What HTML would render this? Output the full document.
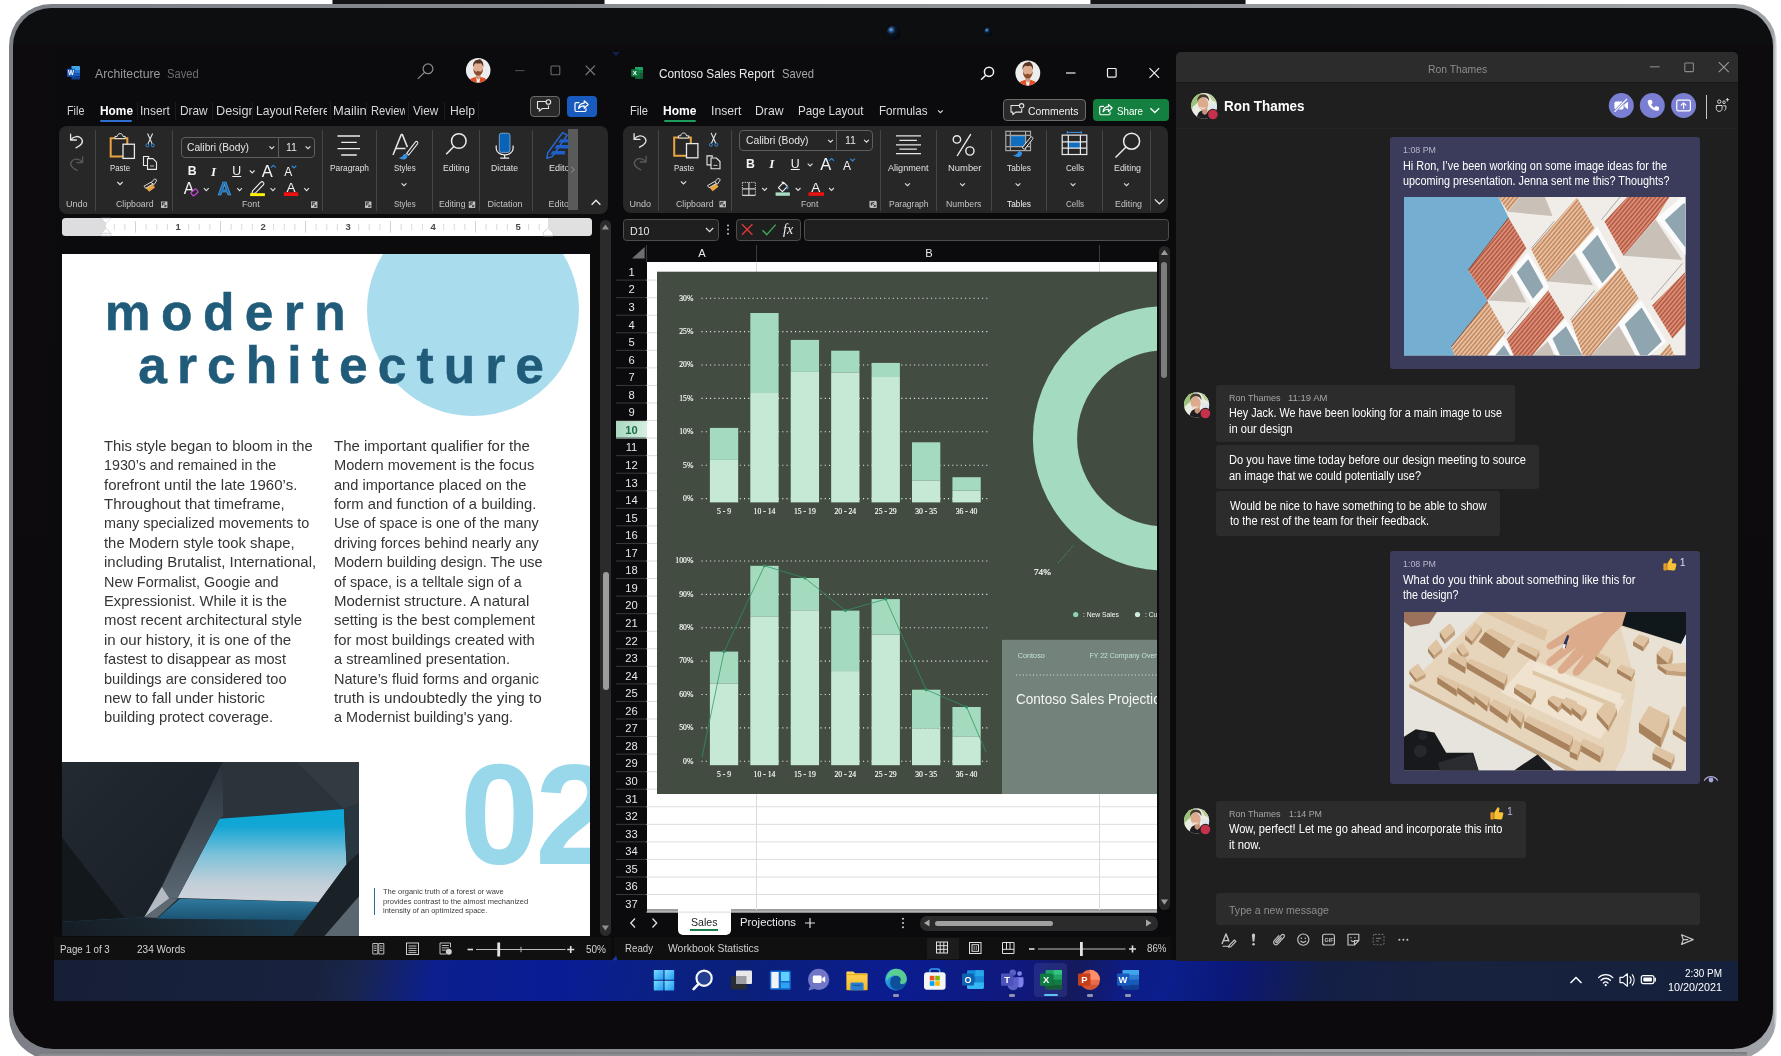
<!DOCTYPE html>
<html lang="en">
<head>
<meta charset="utf-8">
<title>Windows 11 tablet – Word, Excel and Teams</title>
<style>
*{box-sizing:border-box;margin:0;padding:0}
html,body{width:1781px;height:1056px;overflow:hidden;background:#fff}
body{position:relative;font-family:"Liberation Sans",sans-serif;color:#fff;font-size:12px}
.t{position:absolute;white-space:nowrap;line-height:1}
svg{position:absolute;overflow:visible}
#topbtn1,#topbtn2{position:absolute;top:-2px;height:6px;background:#141416;border:1.5px solid #7d8085;border-bottom:none}
#topbtn1{left:332px;width:273px}
#topbtn2{left:1090px;width:156px}
#frame{position:absolute;left:9px;top:4px;width:1768px;height:1056px;border-radius:42px 42px 44px 44px;
  background:linear-gradient(90deg,#7c8086 0,#8b8e93 40%,#9b9da1 85%,#a0a4a9 99.8%,#c6c9cd 99.9%,#ededee 100%)}
#frame:after{content:"";position:absolute;left:30px;right:30px;bottom:3px;height:5px;background:linear-gradient(180deg,#77787c,#9a9b9f)}
#bezel{position:absolute;left:13px;top:8px;width:1760px;height:1041px;border-radius:38px 38px 40px 40px;background:linear-gradient(180deg,#0d0e10 0,#0d0e10 36px,#0e0b0f 37px,#0d0a0e 100%)}
#screen{position:absolute;left:54px;top:50px;width:1684px;height:950.5px;background:#0b0a0d;overflow:hidden}
#g{position:absolute;left:-54px;top:-50px;width:1781px;height:1056px;will-change:transform}
#taskbar{position:absolute;left:54px;top:960px;width:1684px;height:41px;
 background:linear-gradient(102deg,#171f36 0,#18223e 15.5%,#19254c 18%,#0c1f8c 22.5%,#0a1c95 30%,#0b2184 36%,#0a2079 41%,#0b1c90 50%,#10197a 58%,#151a5c 60.5%,#0e1c86 63.5%,#0b1e8c 66%,#0b1876 70%,#141f48 75%,#17223f 82%,#15213b 100%)}
</style>
</head>
<body>
<div id="topbtn1"></div><div id="topbtn2"></div>
<div id="frame"></div>
<div id="bezel"></div>
<svg style="left:0;top:0" width="1781" height="56" viewBox="0 0 1781 56"><defs><radialGradient id="cam" cx=".32" cy=".28" r=".7"><stop offset="0" stop-color="#7fb6e8"/><stop offset=".18" stop-color="#2a5f9e"/><stop offset=".45" stop-color="#0b1626"/><stop offset="1" stop-color="#05070a"/></radialGradient></defs><circle cx="893.600" cy="32.800" r="7" fill="url(#cam)"/><circle cx="988.300" cy="32" r="4.400" fill="url(#cam)"/></svg>
<div id="screen"><div id="g">
<div id="taskbar"></div>
<!-- word -->
<div class="t" style="left:94.6px;top:67.64px;font-size:12px;transform:scaleX(1.0215);transform-origin:0 0;color:#9b9b9b;">Architecture</div>
<div class="t" style="left:167px;top:67.64px;font-size:12px;transform:scaleX(0.9287);transform-origin:0 0;color:#6f6f6f;">Saved</div>
<div class="t" style="left:66.6px;top:105.13px;font-size:12.6px;transform:scaleX(0.857);transform-origin:0 0;color:#d6d6d6;">File</div>
<div class="t" style="left:140.2px;top:105.13px;font-size:12.6px;transform:scaleX(0.9457);transform-origin:0 0;color:#d6d6d6;">Insert</div>
<div class="t" style="left:179.5px;top:105.13px;font-size:12.6px;transform:scaleX(0.9421);transform-origin:0 0;color:#d6d6d6;">Draw</div>
<div class="t" style="left:413px;top:105.13px;font-size:12.6px;transform:scaleX(0.9305);transform-origin:0 0;color:#d6d6d6;">View</div>
<div class="t" style="left:449.5px;top:105.13px;font-size:12.6px;transform:scaleX(0.9686);transform-origin:0 0;color:#d6d6d6;">Help</div>
<div style="position:absolute;left:0;top:0;width:251.5px;height:1056px;overflow:hidden"><div class="t" style="left:216.2px;top:105.13px;font-size:12.6px;transform:scaleX(1.0097);transform-origin:0 0;color:#d6d6d6;">Design</div></div>
<div style="position:absolute;left:0;top:0;width:290.9px;height:1056px;overflow:hidden"><div class="t" style="left:255.6px;top:105.13px;font-size:12.6px;transform:scaleX(0.9648);transform-origin:0 0;color:#d6d6d6;">Layout</div></div>
<div style="position:absolute;left:0;top:0;width:327.4px;height:1056px;overflow:hidden"><div class="t" style="left:293.6px;top:105.13px;font-size:12.6px;transform:scaleX(0.9389);transform-origin:0 0;color:#d6d6d6;">References</div></div>
<div style="position:absolute;left:0;top:0;width:365.6px;height:1056px;overflow:hidden"><div class="t" style="left:333px;top:105.13px;font-size:12.6px;transform:scaleX(1.0278);transform-origin:0 0;color:#d6d6d6;">Mailings</div></div>
<div style="position:absolute;left:0;top:0;width:405.1px;height:1056px;overflow:hidden"><div class="t" style="left:370.5px;top:105.13px;font-size:12.6px;transform:scaleX(0.8859);transform-origin:0 0;color:#d6d6d6;">Review</div></div>
<div class="t" style="left:99.6px;top:105.13px;font-size:12.6px;transform:scaleX(0.9427);transform-origin:0 0;color:#fff;font-weight:bold;">Home</div>
<div style="position:absolute;left:100px;top:120.2px;width:32.4px;height:2px;background:#2f6fd0;border-radius:1px"></div>
<div style="position:absolute;left:136.5px;top:102px;width:1px;height:18px;background:#1c1c1e;"></div>
<div style="position:absolute;left:174.5px;top:102px;width:1px;height:18px;background:#1c1c1e;"></div>
<div style="position:absolute;left:212px;top:102px;width:1px;height:18px;background:#1c1c1e;"></div>
<div style="position:absolute;left:251.5px;top:102px;width:1px;height:18px;background:#1c1c1e;"></div>
<div style="position:absolute;left:291px;top:102px;width:1px;height:18px;background:#1c1c1e;"></div>
<div style="position:absolute;left:329.5px;top:102px;width:1px;height:18px;background:#1c1c1e;"></div>
<div style="position:absolute;left:365.5px;top:102px;width:1px;height:18px;background:#1c1c1e;"></div>
<div style="position:absolute;left:408px;top:102px;width:1px;height:18px;background:#1c1c1e;"></div>
<div style="position:absolute;left:443.5px;top:102px;width:1px;height:18px;background:#1c1c1e;"></div>
<div style="position:absolute;left:478px;top:102px;width:1px;height:18px;background:#1c1c1e;"></div>
<div style="position:absolute;left:530px;top:96.2px;width:29.5px;height:21px;border:1px solid #6a6a6a;border-radius:4px;background:#292929"></div>
<div style="position:absolute;left:567px;top:96.2px;width:30px;height:21px;border-radius:4px;background:#185abd"></div>
<div style="position:absolute;left:59px;top:126px;width:549.3px;height:87.5px;background:#272727;border-radius:8px"></div>
<div class="t" style="left:66px;top:200.48px;font-size:9px;color:#c4c4c4;">Undo</div>
<div style="position:absolute;left:95px;top:130px;width:1px;height:81px;background:#454545;"></div>
<div style="position:absolute;left:172px;top:130px;width:1px;height:81px;background:#454545;"></div>
<div class="t" style="left:110px;top:163.78px;font-size:9px;transform:scaleX(0.869);transform-origin:0 0;color:#e0e0e0;">Paste</div>
<div class="t" style="left:115.5px;top:200.48px;font-size:9px;transform:scaleX(0.9734);transform-origin:0 0;color:#c4c4c4;">Clipboard</div>
<div style="position:absolute;left:180.5px;top:136.5px;width:134px;height:21px;border:1px solid #5e5e5e;border-radius:4px;background:#262626"></div>
<div style="position:absolute;left:278px;top:137.5px;width:1px;height:19px;background:#5e5e5e;"></div>
<div class="t" style="left:187px;top:142.07px;font-size:11.5px;transform:scaleX(0.8901);transform-origin:0 0;color:#e6e6e6;">Calibri (Body)</div>
<div class="t" style="left:286px;top:142.07px;font-size:11.5px;transform:scaleX(0.9214);transform-origin:0 0;color:#e6e6e6;">11</div>
<div class="t" style="left:187.7px;top:165.39px;font-size:12.3px;color:#f4f4f4;font-weight:bold;">B</div>
<div class="t" style="left:211px;top:164.91px;font-size:13px;color:#f4f4f4;font-weight:bold;font-style:italic;font-family:'Liberation Serif',serif;">I</div>
<div class="t" style="left:232.3px;top:165.39px;font-size:12.3px;color:#f4f4f4;text-decoration:underline;text-underline-offset:1px;">U</div>
<div class="t" style="left:261.8px;top:162.63px;font-size:16.5px;color:#f4f4f4;">A</div>
<div class="t" style="left:284.2px;top:166.44px;font-size:12px;color:#f4f4f4;">A</div>
<div class="t" style="left:183.8px;top:180.59px;font-size:15.6px;color:#f0f0f0;">A</div>
<div class="t" style="left:217.7px;top:179.76px;font-size:18.6px;color:#1b6cb2;font-weight:bold;-webkit-text-stroke:.6px #5ab2ee;">A</div>
<div class="t" style="left:286.4px;top:180.67px;font-size:13.5px;color:#f0f0f0;">A</div>
<div class="t" style="left:242px;top:200.48px;font-size:9px;transform:scaleX(0.9773);transform-origin:0 0;color:#c4c4c4;">Font</div>
<div style="position:absolute;left:321.5px;top:130px;width:1px;height:81px;background:#454545;"></div>
<div style="position:absolute;left:376px;top:130px;width:1px;height:81px;background:#454545;"></div>
<div style="position:absolute;left:431.5px;top:130px;width:1px;height:81px;background:#454545;"></div>
<div style="position:absolute;left:479px;top:130px;width:1px;height:81px;background:#454545;"></div>
<div style="position:absolute;left:532px;top:130px;width:1px;height:81px;background:#454545;"></div>
<div class="t" style="left:329.5px;top:163.78px;font-size:9px;transform:scaleX(0.9279);transform-origin:0 0;color:#e0e0e0;">Paragraph</div>
<div class="t" style="left:393.5px;top:163.78px;font-size:9px;transform:scaleX(0.8813);transform-origin:0 0;color:#e0e0e0;">Styles</div>
<div class="t" style="left:393.5px;top:200.48px;font-size:9px;transform:scaleX(0.8813);transform-origin:0 0;color:#c4c4c4;">Styles</div>
<div class="t" style="left:443px;top:163.78px;font-size:9px;transform:scaleX(0.963);transform-origin:0 0;color:#e0e0e0;">Editing</div>
<div class="t" style="left:439px;top:200.48px;font-size:9px;transform:scaleX(0.963);transform-origin:0 0;color:#c4c4c4;">Editing</div>
<div class="t" style="left:491px;top:163.78px;font-size:9px;transform:scaleX(0.9639);transform-origin:0 0;color:#e0e0e0;">Dictate</div>
<div class="t" style="left:487.5px;top:200.48px;font-size:9px;color:#c4c4c4;">Dictation</div>
<div class="t" style="left:549px;top:163.78px;font-size:9px;color:#e0e0e0;">Editor</div>
<div class="t" style="left:548.5px;top:200.48px;font-size:9px;color:#c4c4c4;">Editor</div>
<div style="position:absolute;left:568px;top:129px;width:10px;height:81px;background:#5a5a5a;"></div>
<div style="position:absolute;left:61.8px;top:217.9px;width:530.2px;height:18.100px;border-radius:3.500px;background:linear-gradient(90deg,#dddde0 0,#dddde0 44.200px,#fff 44.200px,#fff 486.400px,#e0e0e0 486.400px)"></div>
<div class="t" style="left:175.56px;top:222.06px;font-size:9.5px;color:#4a4a4a;font-weight:bold;">1</div>
<div class="t" style="left:260.56px;top:222.06px;font-size:9.5px;color:#4a4a4a;font-weight:bold;">2</div>
<div class="t" style="left:345.56px;top:222.06px;font-size:9.5px;color:#4a4a4a;font-weight:bold;">3</div>
<div class="t" style="left:430.56px;top:222.06px;font-size:9.5px;color:#4a4a4a;font-weight:bold;">4</div>
<div class="t" style="left:515.56px;top:222.06px;font-size:9.5px;color:#4a4a4a;font-weight:bold;">5</div>
<div style="position:absolute;left:61.5px;top:254.300px;width:528.7px;height:682px;background:#fff;overflow:hidden"><div style="position:absolute;left:305.100px;top:-50.800px;width:212.800px;height:212.800px;border-radius:50%;background:#a9ddee"></div><!--PAGE--></div>
<div class="t" style="left:104.8px;top:286.61px;font-size:51.5px;letter-spacing:10.43px;color:#205b79;font-weight:bold;-webkit-text-stroke:.5px #205b79;">modern</div>
<div class="t" style="left:138.2px;top:339.51px;font-size:51.5px;letter-spacing:10.09px;color:#205b79;font-weight:bold;-webkit-text-stroke:.5px #205b79;">architecture</div>
<div class="t" style="left:104px;top:438.84px;font-size:14.6px;transform:scaleX(1.0129);transform-origin:0 0;color:#353535;">This style began to bloom in the</div>
<div class="t" style="left:104px;top:458.24px;font-size:14.6px;transform:scaleX(0.9797);transform-origin:0 0;color:#353535;">1930’s and remained in the</div>
<div class="t" style="left:104px;top:477.64px;font-size:14.6px;transform:scaleX(1.0285);transform-origin:0 0;color:#353535;">forefront until the late 1960’s.</div>
<div class="t" style="left:104px;top:497.04px;font-size:14.6px;transform:scaleX(1.0267);transform-origin:0 0;color:#353535;">Throughout that timeframe,</div>
<div class="t" style="left:104px;top:516.44px;font-size:14.6px;transform:scaleX(0.9883);transform-origin:0 0;color:#353535;">many specialized movements to</div>
<div class="t" style="left:104px;top:535.84px;font-size:14.6px;transform:scaleX(1.0172);transform-origin:0 0;color:#353535;">the Modern style took shape,</div>
<div class="t" style="left:104px;top:555.24px;font-size:14.6px;transform:scaleX(1.0254);transform-origin:0 0;color:#353535;">including Brutalist, International,</div>
<div class="t" style="left:104px;top:574.64px;font-size:14.6px;transform:scaleX(0.9876);transform-origin:0 0;color:#353535;">New Formalist, Googie and</div>
<div class="t" style="left:104px;top:594.04px;font-size:14.6px;transform:scaleX(1.0074);transform-origin:0 0;color:#353535;">Expressionist. While it is the</div>
<div class="t" style="left:104px;top:613.44px;font-size:14.6px;transform:scaleX(1.022);transform-origin:0 0;color:#353535;">most recent architectural style</div>
<div class="t" style="left:104px;top:632.84px;font-size:14.6px;transform:scaleX(1.0319);transform-origin:0 0;color:#353535;">in our history, it is one of the</div>
<div class="t" style="left:104px;top:652.24px;font-size:14.6px;transform:scaleX(0.9968);transform-origin:0 0;color:#353535;">fastest to disappear as most</div>
<div class="t" style="left:104px;top:671.64px;font-size:14.6px;color:#353535;">buildings are considered too</div>
<div class="t" style="left:104px;top:691.04px;font-size:14.6px;transform:scaleX(1.0226);transform-origin:0 0;color:#353535;">new to fall under historic</div>
<div class="t" style="left:104px;top:710.44px;font-size:14.6px;transform:scaleX(1.0114);transform-origin:0 0;color:#353535;">building protect coverage.</div>
<div class="t" style="left:334px;top:438.84px;font-size:14.6px;transform:scaleX(1.0278);transform-origin:0 0;color:#353535;">The important qualifier for the</div>
<div class="t" style="left:334px;top:458.24px;font-size:14.6px;transform:scaleX(1.0039);transform-origin:0 0;color:#353535;">Modern movement is the focus</div>
<div class="t" style="left:334px;top:477.64px;font-size:14.6px;color:#353535;">and importance placed on the</div>
<div class="t" style="left:334px;top:497.04px;font-size:14.6px;transform:scaleX(1.0137);transform-origin:0 0;color:#353535;">form and function of a building.</div>
<div class="t" style="left:334px;top:516.44px;font-size:14.6px;transform:scaleX(0.9819);transform-origin:0 0;color:#353535;">Use of space is one of the many</div>
<div class="t" style="left:334px;top:535.84px;font-size:14.6px;transform:scaleX(0.9935);transform-origin:0 0;color:#353535;">driving forces behind nearly any</div>
<div class="t" style="left:334px;top:555.24px;font-size:14.6px;transform:scaleX(0.9859);transform-origin:0 0;color:#353535;">Modern building design. The use</div>
<div class="t" style="left:334px;top:574.64px;font-size:14.6px;transform:scaleX(0.9805);transform-origin:0 0;color:#353535;">of space, is a telltale sign of a</div>
<div class="t" style="left:334px;top:594.04px;font-size:14.6px;transform:scaleX(1.0285);transform-origin:0 0;color:#353535;">Modernist structure. A natural</div>
<div class="t" style="left:334px;top:613.44px;font-size:14.6px;transform:scaleX(1.0188);transform-origin:0 0;color:#353535;">setting is the best complement</div>
<div class="t" style="left:334px;top:632.84px;font-size:14.6px;transform:scaleX(1.0188);transform-origin:0 0;color:#353535;">for most buildings created with</div>
<div class="t" style="left:334px;top:652.24px;font-size:14.6px;color:#353535;">a streamlined presentation.</div>
<div class="t" style="left:334px;top:671.64px;font-size:14.6px;transform:scaleX(0.9963);transform-origin:0 0;color:#353535;">Nature’s fluid forms and organic</div>
<div class="t" style="left:334px;top:691.04px;font-size:14.6px;transform:scaleX(1.0455);transform-origin:0 0;color:#353535;">truth is undoubtedly the ying to</div>
<div class="t" style="left:334px;top:710.44px;font-size:14.6px;transform:scaleX(0.9927);transform-origin:0 0;color:#353535;">a Modernist building's yang.</div>
<div style="position:absolute;left:440px;top:740px;width:150.200px;height:196.300px;overflow:hidden"><div class="t" style="left:20px;top:3.6px;font-size:142px;color:#99d8ea;font-weight:bold;">0</div><div class="t" style="left:95.3px;top:3.6px;font-size:142px;color:#99d8ea;font-weight:bold;">2</div></div>
<div style="position:absolute;left:374px;top:888px;width:1.2px;height:26.5px;background:#2b6a8a;"></div>
<div class="t" style="left:382.5px;top:888.01px;font-size:7.2px;transform:scaleX(1.0462);transform-origin:0 0;color:#3a3a3a;">The organic truth of a forest or wave</div>
<div class="t" style="left:382.5px;top:897.51px;font-size:7.2px;transform:scaleX(1.0477);transform-origin:0 0;color:#3a3a3a;">provides contrast to the almost mechanized</div>
<div class="t" style="left:382.5px;top:907.01px;font-size:7.2px;transform:scaleX(1.0403);transform-origin:0 0;color:#3a3a3a;">intensity of an optimized space.</div>
<svg style="left:61.7px;top:762.400px;overflow:hidden" width="297.700" height="173.900" viewBox="42.800 41 1655 967" preserveAspectRatio="none"><defs><linearGradient id="pc1" x1="0" y1="0" x2="0" y2="1"><stop offset="0" stop-color="#0aa9d8"/><stop offset=".18" stop-color="#12a6d4"/><stop offset=".5" stop-color="#7fc2da"/><stop offset=".8" stop-color="#c3cfd8"/><stop offset="1" stop-color="#cfd4da"/></linearGradient><linearGradient id="pc2" x1="0" y1="0" x2="0" y2="1"><stop offset="0" stop-color="#2f7a9f"/><stop offset=".5" stop-color="#1d5777"/><stop offset="1" stop-color="#173d55"/></linearGradient><linearGradient id="pc3" x1="0" y1="0" x2="1" y2="1"><stop offset="0" stop-color="#222a32"/><stop offset="1" stop-color="#181e24"/></linearGradient><linearGradient id="pc4" x1="0" y1="0" x2="0" y2="1"><stop offset="0" stop-color="#2a323a"/><stop offset=".5" stop-color="#3f4a54"/><stop offset="1" stop-color="#5a6873"/></linearGradient><linearGradient id="pc5" x1="0" y1="0" x2="1" y2="0"><stop offset="0" stop-color="#151a1f"/><stop offset=".45" stop-color="#1c252d"/><stop offset="1" stop-color="#1b3a4e"/></linearGradient></defs><rect x="42" y="41" width="1660" height="970" fill="#1d242b"/><path d="M42 41h893L500 905 42 930z" fill="url(#pc3)"/><path d="M42 460l350 450-350 20z" fill="#13181c"/><path d="M935 41h765v230l-90 32-692 54 22-17z" fill="#2b333b"/><path d="M1350 41h350v230l-90 32z" fill="#323a42"/><path d="M918 357l692-54 15 307-155 210-785-23z" fill="url(#pc1)"/><path d="M1610 303l90-32v270l-75 69z" fill="#27363f"/><path d="M640 800l830 20-145 190H42v-80l458-25z" fill="url(#pc2)"/><path d="M42 930l458-25 140-105 60 0-130 112 830 8-75 90H42z" fill="url(#pc5)" opacity=".92"/><path d="M935 41l5 299-22 17-233 440-45 3-42-65z" fill="url(#pc4)"/><path d="M598 735l42 65-140 105z" fill="#b4bac2"/><path d="M500 905l140-105 50-2-120 110z" fill="#5d6871"/><path d="M1625 610l75-69v240l-200 230h-175l145-191z" fill="#1a2127"/><path d="M1700 781v230h-200z" fill="#5a6670"/></svg>
<div style="position:absolute;left:599.8px;top:220px;width:11px;height:716px;background:#2b2b2b;border-radius:5.500px"></div>
<div style="position:absolute;left:602.5px;top:572.4px;width:6px;height:117.6px;background:#9c9c9c;border-radius:3px"></div>
<div style="position:absolute;left:54px;top:937.2px;width:556.5px;height:23px;background:#101010;"></div>
<div class="t" style="left:60.3px;top:943.51px;font-size:10.5px;transform:scaleX(0.9253);transform-origin:0 0;color:#d4d4d4;">Page 1 of 3</div>
<div class="t" style="left:136.7px;top:943.51px;font-size:10.5px;transform:scaleX(0.9549);transform-origin:0 0;color:#d4d4d4;">234 Words</div>
<div class="t" style="left:586px;top:943.51px;font-size:10.5px;transform:scaleX(0.9517);transform-origin:0 0;color:#d4d4d4;">50%</div>
<svg style="left:0;top:0" width="1781" height="1056" viewBox="0 0 1781 1056"><g><path d="M71.5 66h7.7c.5 0 .8.3.8.8V70h-8.5z" fill="#41a5ee"/><path d="M71.5 70H80v3.2h-8.500z" fill="#2b7cd3"/><path d="M71.5 73.200H80v3.1h-8.500z" fill="#185abd"/><path d="M71.5 76.3H80v2.400c0 .5-.3.8-.8.8h-7.700z" fill="#103f91"/><rect x="67" y="68.800" width="8" height="8" rx=".8" fill="#185abd"/></g>
<text x="68" y="75.400" font-size="6.400" font-weight="bold" fill="#fff" font-family="Liberation Sans,sans-serif">W</text>
<g fill="none" stroke="#8c8c8c" stroke-width="1.2"><circle cx="428" cy="68.800" r="4.900"/><path d="M424.500 72.400l-6.700 6.500"/></g>
<path d="M515 70.600h9.500" stroke="#4c4c4c" stroke-width="1.1"/><rect x="551" y="66" width="8.800" height="8.800" rx="1" fill="none" stroke="#6a6a6a" stroke-width="1.1"/><path d="M585.700 65.600l9.200 9.400M594.900 65.600l-9.200 9.400" stroke="#7c7c7c" stroke-width="1.1"/>
<g><clipPath id="wa"><circle cx="478.2" cy="70.3" r="12.3"/></clipPath><g clip-path="url(#wa)"><g transform="translate(478.2 70.3) scale(0.98)"><rect x="-13" y="-13" width="26" height="26" fill="#ededee"/><path d="M-10 13c.2-3.400 2.400-5 5.400-5.600l2.400-.6h4.400l2.400.6c3 .6 5.200 2.200 5.400 5.600z" fill="#e04f28"/><path d="M-2 7.600h4l-.8 5.400h-2.400z" fill="#f1f1f1"/><path d="M-2.400 3.500h4.800v4.300l-2.400 1.600-2.400-1.600z" fill="#cf9a7c"/><ellipse cx="0" cy="-2" rx="4.900" ry="6.300" fill="#e0ad90"/><path d="M-4.900 -1.800c0 4.600 2 7.200 4.900 7.200s4.900-2.600 4.900-7.200c-.9 2.200-1.700 3.100-2.800 3.300-.7-.6-1.300-.8-2.100-.8s-1.400.2-2.100.8c-1.100-.2-1.900-1.100-2.800-3.300z" fill="#8d4d2f"/><path d="M-5.100 -3c-.8-4.600 1.500-7.800 5.100-7.800 1.500-.9 3 .1 3.400.9 1.600 1.300 2.200 3.700 1.700 6.900-.5-2.200-1.400-3.700-2.900-4.200-1.400.5-3 .5-4.400 0-1.500.5-2.400 2-2.900 4.200z" fill="#5a3422"/></g></g></g>
<g fill="none" stroke="#e4e4e4" stroke-width="1.1" stroke-linejoin="round"><path d="M546 101.500h-8.500v7h1.800v2.600l3-2.600h6.200v-3"/><circle cx="548.400" cy="102" r="2.300" fill="#292929"/></g>
<g fill="none" stroke="#fff" stroke-width="1.200" stroke-linejoin="round" stroke-linecap="round"><path d="M579 102.600h-2.800c-.7 0-1.200.5-1.200 1.200v6.500c0 .7.500 1.200 1.200 1.200h8.600c.7 0 1.200-.5 1.200-1.200v-1.800"/><path d="M584.200 100.800l4 3.700-4 3.700v-2.300c-3.200 0-4.600 1-5.600 2.700.2-3.400 2-5.300 5.600-5.500z"/></g>
<g fill="none" stroke="#e6e6e6" stroke-width="1.3" stroke-linecap="round" stroke-linejoin="round"><path d="M70.6 134.2v5.8h5.8"/><path d="M71 139.6c2.6-3.4 8-4.4 10.6-.8 2.4 3.6-.6 6.6-5.6 9"/></g>
<g fill="none" stroke="#5a5a5a" stroke-width="1.3" stroke-linecap="round" stroke-linejoin="round"><path d="M82.6 156.8v5.8h-5.8"/><path d="M82.2 162.2c-2.6-3.4-8-4.4-10.6-.8-2.4 3.6.6 6.6 5.6 9"/></g>
<g transform="translate(0 0)"><path d="M110.7 138.2h16.6v18.2h-16.6z" fill="none" stroke="#e9a441" stroke-width="2"/><path d="M115 138.6v-2.2h2.2c.2-1.6 1.2-2.8 2.9-2.8s2.7 1.2 2.9 2.8h2.2v2.2z" fill="#272727" stroke="#e8e8e8" stroke-width="1"/><rect x="123" y="144.2" width="11.4" height="14.2" fill="#272727" stroke="#e8e8e8" stroke-width="1.3"/></g>
<path d="M117.4 182l2.6 2.6 2.6-2.6" fill="none" stroke="#e0e0e0" stroke-width="1.2"/>
<g transform="translate(0 0)" fill="none"><path d="M147.6 133.5l4.6 10.4M152.6 133.5l-4.6 10.4" stroke="#e8e8e8" stroke-width="1.1"/><circle cx="147.4" cy="145.3" r="1.5" stroke="#3a8fd8" stroke-width="1"/><circle cx="152.8" cy="145.3" r="1.5" stroke="#3a8fd8" stroke-width="1"/></g>
<g transform="translate(0 0)" fill="none" stroke="#e8e8e8" stroke-width="1.1"><path d="M147.5 165.5h-4v-9h5.2v1.6"/><path d="M147.5 158.6h5.4l3.6 3.6v7.2h-9z"/><path d="M150 166h4" stroke-width=".8"/></g>
<g transform="translate(0 0)"><path d="M144 186.2l7.4-4.2 3.6 5.4-5.8 4.4z" fill="#e9a441"/><path d="M144 186.2l7.4-4.2 1.4 2.1-7.2 4.2z" fill="#272727" stroke="#e8e8e8" stroke-width=".9"/><path d="M151.2 182.6l3.4-3.8 2.2 1.4-2.6 4.4z" fill="#272727" stroke="#e8e8e8" stroke-width=".9"/></g>
<g transform="translate(161 201.5)"><rect x="0" y="0" width="6.400" height="6.400" fill="#c6c6c6"/><path d="M1.300 4.200V1.300h2.900" fill="none" stroke="#272727" stroke-width="1"/><path d="M2 2l2.700 2.700" stroke="#272727" stroke-width=".9"/><path d="M3.200 5h1.800V3.200" fill="none" stroke="#272727" stroke-width=".8"/></g>
<g transform="translate(311 201.5)"><rect x="0" y="0" width="6.400" height="6.400" fill="#c6c6c6"/><path d="M1.300 4.200V1.300h2.900" fill="none" stroke="#272727" stroke-width="1"/><path d="M2 2l2.700 2.700" stroke="#272727" stroke-width=".9"/><path d="M3.200 5h1.800V3.200" fill="none" stroke="#272727" stroke-width=".8"/></g>
<path d="M269.4 146.3l2.4 2.4 2.4-2.4" fill="none" stroke="#e0e0e0" stroke-width="1.1"/>
<path d="M305.6 146.3l2.4 2.4 2.4-2.4" fill="none" stroke="#e0e0e0" stroke-width="1.1"/>
<path d="M249.8 170.5l2.4 2.4 2.4-2.4" fill="none" stroke="#e0e0e0" stroke-width="1.1"/>
<path d="M270.900 167.600l2.400-2.300 2.400 2.300" fill="none" stroke="#2b88d8" stroke-width="1.200"/>
<path d="M291.700 165.700l2.300 2.200 2.300-2.200" fill="none" stroke="#2b88d8" stroke-width="1.200"/>
<rect x="0" y="0" width="6.600" height="4.400" rx="1" transform="translate(190.600 192.800) rotate(-40)" fill="#272727" stroke="#c44ad6" stroke-width="1.300"/>
<path d="M203.9 188.2l2.4 2.4 2.4-2.4" fill="none" stroke="#e0e0e0" stroke-width="1.1"/>
<path d="M237.2 188.2l2.4 2.4 2.4-2.4" fill="none" stroke="#e0e0e0" stroke-width="1.1"/>
<path d="M252.600 190.800l8-8.400c.8-.8 2-.8 2.700-.1.800.7.700 1.800 0 2.600l-7.900 8.200-3.600.6z" fill="none" stroke="#f0f0f0" stroke-width="1.100"/><rect x="250.100" y="193.200" width="14.800" height="2.900" fill="#fff100"/>
<path d="M270.5 188.2l2.4 2.4 2.4-2.4" fill="none" stroke="#e0e0e0" stroke-width="1.1"/>
<rect x="283.800" y="192.300" width="14.400" height="3.700" fill="#ee1111"/>
<path d="M304.2 188.2l2.4 2.4 2.4-2.4" fill="none" stroke="#e0e0e0" stroke-width="1.1"/>
<path d="M337.500 136h22.500M341.200 142.400h15.600M337.500 148.700h22.500M341.200 155h15.600" stroke="#ececec" stroke-width="1.300"/>
<g transform="translate(365 201.5)"><rect x="0" y="0" width="6.400" height="6.400" fill="#c6c6c6"/><path d="M1.300 4.200V1.300h2.900" fill="none" stroke="#272727" stroke-width="1"/><path d="M2 2l2.700 2.700" stroke="#272727" stroke-width=".9"/><path d="M3.200 5h1.800V3.200" fill="none" stroke="#272727" stroke-width=".8"/></g>
<g fill="none" stroke="#e6e6e6" stroke-width="1.500" stroke-linejoin="round"><path d="M393 155l8.200-20.400h1.200l5 12.500M396 148.500h9.500"/><path d="M417.400 141.800c.6.500.6 1.300.1 2l-8.800 11.200-2-1.600 8.600-11.300c.5-.7 1.400-.8 2.100-.3z" stroke-width="1.100" fill="#272727"/></g><path d="M398.500 157.600c2 .2 3.600-.8 4.600-2.400 1-1.400 2.300-1.700 3.400-.9 1.200.9 1.300 2.300.2 3.700-1.700 2-5 2.300-8.200-.4z" fill="#3a8fd8"/>
<path d="M401.6 183.3l2.4 2.4 2.4-2.4" fill="none" stroke="#e0e0e0" stroke-width="1.1"/>
<g fill="none" stroke="#ececec" stroke-width="1.500"><circle cx="458.800" cy="141" r="7.300"/><path d="M453.800 146.500l-7.600 7.800"/></g>
<g transform="translate(468.800 201.500)"><rect x="0" y="0" width="6.400" height="6.400" fill="#c6c6c6"/><path d="M1.300 4.200V1.300h2.900" fill="none" stroke="#272727" stroke-width="1"/><path d="M2 2l2.700 2.700" stroke="#272727" stroke-width=".9"/><path d="M3.200 5h1.800V3.200" fill="none" stroke="#272727" stroke-width=".8"/></g>
<rect x="499.300" y="133.200" width="10.700" height="19.200" rx="2.200" fill="#0a63b5" stroke="#9cc4ea" stroke-width=".7"/><path d="M496.200 145.400v3.200a8.450 6.300 0 0 0 16.900 0v-3.200M504.650 154.900v2.900M500.200 158.200h9" fill="none" stroke="#ececec" stroke-width="1.250"/>
<g><path d="M562.600 132.600l4.600 2.600-15 21.400-5.400 1.600 1-5.400z" fill="none" stroke="#2568d4" stroke-width="1.500" stroke-linejoin="round"/><path d="M560.500 139.200h8v3.200h-10.200zM556.600 145h12v3.400h-14.300zM552.600 151h12.500v3.600h-14.800z" fill="#1f5fc8"/></g>
<path d="M571.500 166.800l2.600 2.800-2.600 2.800" fill="none" stroke="#9a9a9a" stroke-width="1"/>
<path d="M591.600 204.800l4.400-4.600 4.400 4.600" fill="none" stroke="#e6e6e6" stroke-width="1.400"/>
<path d="M114.25 224v6" stroke="#d9d9d9" stroke-width="1"/><path d="M124.88 224v6" stroke="#d9d9d9" stroke-width="1"/><path d="M135.5 221.200v11.400" stroke="#d2d2d2" stroke-width="1"/><path d="M146.12 224v6" stroke="#d9d9d9" stroke-width="1"/><path d="M156.75 224v6" stroke="#d9d9d9" stroke-width="1"/><path d="M167.38 224v6" stroke="#d9d9d9" stroke-width="1"/><path d="M188.62 224v6" stroke="#d9d9d9" stroke-width="1"/><path d="M199.25 224v6" stroke="#d9d9d9" stroke-width="1"/><path d="M209.88 224v6" stroke="#d9d9d9" stroke-width="1"/><path d="M220.5 221.200v11.400" stroke="#d2d2d2" stroke-width="1"/><path d="M231.12 224v6" stroke="#d9d9d9" stroke-width="1"/><path d="M241.75 224v6" stroke="#d9d9d9" stroke-width="1"/><path d="M252.38 224v6" stroke="#d9d9d9" stroke-width="1"/><path d="M273.62 224v6" stroke="#d9d9d9" stroke-width="1"/><path d="M284.25 224v6" stroke="#d9d9d9" stroke-width="1"/><path d="M294.88 224v6" stroke="#d9d9d9" stroke-width="1"/><path d="M305.5 221.200v11.400" stroke="#d2d2d2" stroke-width="1"/><path d="M316.12 224v6" stroke="#d9d9d9" stroke-width="1"/><path d="M326.75 224v6" stroke="#d9d9d9" stroke-width="1"/><path d="M337.38 224v6" stroke="#d9d9d9" stroke-width="1"/><path d="M358.62 224v6" stroke="#d9d9d9" stroke-width="1"/><path d="M369.25 224v6" stroke="#d9d9d9" stroke-width="1"/><path d="M379.88 224v6" stroke="#d9d9d9" stroke-width="1"/><path d="M390.5 221.200v11.400" stroke="#d2d2d2" stroke-width="1"/><path d="M401.12 224v6" stroke="#d9d9d9" stroke-width="1"/><path d="M411.75 224v6" stroke="#d9d9d9" stroke-width="1"/><path d="M422.38 224v6" stroke="#d9d9d9" stroke-width="1"/><path d="M443.62 224v6" stroke="#d9d9d9" stroke-width="1"/><path d="M454.25 224v6" stroke="#d9d9d9" stroke-width="1"/><path d="M464.88 224v6" stroke="#d9d9d9" stroke-width="1"/><path d="M475.5 221.200v11.400" stroke="#d2d2d2" stroke-width="1"/><path d="M486.12 224v6" stroke="#d9d9d9" stroke-width="1"/><path d="M496.75 224v6" stroke="#d9d9d9" stroke-width="1"/><path d="M507.38 224v6" stroke="#d9d9d9" stroke-width="1"/><path d="M528.62 224v6" stroke="#d9d9d9" stroke-width="1"/><path d="M539.25 224v6" stroke="#d9d9d9" stroke-width="1"/>
<g fill="#fff" stroke="#cfcfcf" stroke-width=".8"><path d="M101 218.300h10l-5 5.200z"/><path d="M101 233.400l5-5.200 5 5.200z"/><path d="M101 233.400h10v2.300h-10z"/><path d="M543.400 235.800v-3.400l4.800-4 4.800 4v3.400z"/></g>
<path d="M601.800 229.600l3.600-5.200 3.600 5.200z" fill="#8f8f8f"/><path d="M601.800 925.400l3.600 5.200 3.600-5.200z" fill="#8f8f8f"/>
<g fill="none" stroke="#d0d0d0" stroke-width="1"><path d="M372.800 943.500h5v10.500h-5zM378.800 943.500h5v10.500h-5zM374 946h2.600M374 948.200h2.600M374 950.400h2.600M380 946h2.600M380 948.200h2.600M380 950.400h2.600" stroke-width=".9"/><rect x="406.500" y="943" width="12" height="11.500"/><path d="M408.500 946h8M408.500 948.300h8M408.500 950.600h8M408.500 952.600h8" stroke-width=".9"/><path d="M446.500 954h-6.500v-11h10.500v4.500M441.800 945.500h7M441.800 947.800h7M441.800 950.100h4" stroke-width=".9"/><circle cx="448.800" cy="951.800" r="3" fill="#d0d0d0" stroke="none"/></g>
<path d="M467.500 949.500h5.500" stroke="#e0e0e0" stroke-width="1.600"/><path d="M476 949.500h89.500" stroke="#bdbdbd" stroke-width="1"/><rect x="497.300" y="942.500" width="2.800" height="14" fill="#e4e4e4"/><path d="M521 946.800v5.400" stroke="#bdbdbd" stroke-width="1"/><path d="M567.200 949.500h7M570.700 946v7" stroke="#e0e0e0" stroke-width="1.600"/></svg>
<!-- excel -->
<div class="t" style="left:658.9px;top:67.83px;font-size:12.6px;transform:scaleX(0.9378);transform-origin:0 0;color:#ececec;">Contoso Sales Report</div>
<div class="t" style="left:781.7px;top:67.83px;font-size:12.6px;transform:scaleX(0.8929);transform-origin:0 0;color:#a6a6a6;">Saved</div>
<div class="t" style="left:630px;top:105.33px;font-size:12.6px;transform:scaleX(0.8866);transform-origin:0 0;color:#dcdcdc;">File</div>
<div class="t" style="left:710.5px;top:105.33px;font-size:12.6px;transform:scaleX(0.9679);transform-origin:0 0;color:#dcdcdc;">Insert</div>
<div class="t" style="left:755px;top:105.33px;font-size:12.6px;transform:scaleX(0.9693);transform-origin:0 0;color:#dcdcdc;">Draw</div>
<div class="t" style="left:798px;top:105.33px;font-size:12.6px;transform:scaleX(0.9257);transform-origin:0 0;color:#dcdcdc;">Page Layout</div>
<div class="t" style="left:878.5px;top:105.33px;font-size:12.6px;transform:scaleX(0.9236);transform-origin:0 0;color:#dcdcdc;">Formulas</div>
<div class="t" style="left:662.6px;top:105.33px;font-size:12.6px;transform:scaleX(0.9541);transform-origin:0 0;color:#fff;font-weight:bold;">Home</div>
<div style="position:absolute;left:664px;top:120.3px;width:31.5px;height:2px;background:#1a9c5b;border-radius:1px"></div>
<div style="position:absolute;left:1003px;top:99.300px;width:82.500px;height:21.300px;border:1px solid #6c6c6c;border-radius:4px;background:#2a2a2a"></div>
<div style="position:absolute;left:1092.500px;top:99.300px;width:76px;height:21.300px;border-radius:4px;background:#14803f"></div>
<div class="t" style="left:1027.5px;top:105.92px;font-size:11.2px;transform:scaleX(0.9327);transform-origin:0 0;color:#f0f0f0;">Comments</div>
<div class="t" style="left:1117px;top:105.92px;font-size:11.2px;transform:scaleX(0.8699);transform-origin:0 0;color:#fff;">Share</div>
<div style="position:absolute;left:623px;top:126px;width:545.4px;height:87.3px;background:#272727;border-radius:8px"></div>
<div class="t" style="left:629.5px;top:200.48px;font-size:9px;color:#c4c4c4;">Undo</div>
<div style="position:absolute;left:657.7px;top:130px;width:1px;height:81px;background:#454545;"></div>
<div style="position:absolute;left:731px;top:130px;width:1px;height:81px;background:#454545;"></div>
<div class="t" style="left:673.5px;top:163.78px;font-size:9px;transform:scaleX(0.869);transform-origin:0 0;color:#e0e0e0;">Paste</div>
<div class="t" style="left:676px;top:200.48px;font-size:9px;transform:scaleX(0.9734);transform-origin:0 0;color:#c4c4c4;">Clipboard</div>
<div style="position:absolute;left:563.5px;top:0px;width:0px;height:0px;background:none;"></div>
<div style="position:absolute;left:739px;top:130.2px;width:134px;height:21px;border:1px solid #5e5e5e;border-radius:4px;background:#262626"></div>
<div style="position:absolute;left:835.5px;top:131.2px;width:1px;height:19px;background:#5e5e5e;"></div>
<div class="t" style="left:745.5px;top:135.27px;font-size:11.5px;transform:scaleX(0.8972);transform-origin:0 0;color:#e6e6e6;">Calibri (Body)</div>
<div class="t" style="left:844.5px;top:135.27px;font-size:11.5px;transform:scaleX(0.9214);transform-origin:0 0;color:#e6e6e6;">11</div>
<div class="t" style="left:745.9px;top:157.89px;font-size:12.3px;color:#f4f4f4;font-weight:bold;">B</div>
<div class="t" style="left:769.3px;top:157.41px;font-size:13px;color:#f4f4f4;font-weight:bold;font-style:italic;font-family:'Liberation Serif',serif;">I</div>
<div class="t" style="left:790.8px;top:157.89px;font-size:12.3px;color:#f4f4f4;text-decoration:underline;text-underline-offset:1px;">U</div>
<div class="t" style="left:820.2px;top:155.83px;font-size:16.5px;color:#f4f4f4;">A</div>
<div class="t" style="left:843px;top:159.64px;font-size:12px;color:#f4f4f4;">A</div>
<div class="t" style="left:811.3px;top:180.57px;font-size:13.5px;color:#f0f0f0;">A</div>
<div class="t" style="left:800.5px;top:200.48px;font-size:9px;transform:scaleX(0.9606);transform-origin:0 0;color:#c4c4c4;">Font</div>
<div style="position:absolute;left:880px;top:130px;width:1px;height:81px;background:#454545;"></div>
<div style="position:absolute;left:935.5px;top:130px;width:1px;height:81px;background:#454545;"></div>
<div style="position:absolute;left:991px;top:130px;width:1px;height:81px;background:#454545;"></div>
<div style="position:absolute;left:1046px;top:130px;width:1px;height:81px;background:#454545;"></div>
<div style="position:absolute;left:1102px;top:130px;width:1px;height:81px;background:#454545;"></div>
<div style="position:absolute;left:1149.5px;top:130px;width:1px;height:81px;background:#454545;"></div>
<div class="t" style="left:888px;top:163.78px;font-size:9px;transform:scaleX(1.012);transform-origin:0 0;color:#e0e0e0;">Alignment</div>
<div class="t" style="left:888.5px;top:200.48px;font-size:9px;transform:scaleX(0.9398);transform-origin:0 0;color:#c4c4c4;">Paragraph</div>
<div class="t" style="left:947.5px;top:163.78px;font-size:9px;transform:scaleX(1.0465);transform-origin:0 0;color:#e0e0e0;">Number</div>
<div class="t" style="left:946px;top:200.48px;font-size:9px;transform:scaleX(0.9723);transform-origin:0 0;color:#c4c4c4;">Numbers</div>
<div class="t" style="left:1007px;top:163.78px;font-size:9px;transform:scaleX(0.9225);transform-origin:0 0;color:#e0e0e0;">Tables</div>
<div class="t" style="left:1007px;top:200.48px;font-size:9px;transform:scaleX(0.9225);transform-origin:0 0;color:#f4f4f4;">Tables</div>
<div class="t" style="left:1065.5px;top:163.78px;font-size:9px;transform:scaleX(0.8998);transform-origin:0 0;color:#e0e0e0;">Cells</div>
<div class="t" style="left:1065.5px;top:200.48px;font-size:9px;transform:scaleX(0.8998);transform-origin:0 0;color:#c4c4c4;">Cells</div>
<div class="t" style="left:1114px;top:163.78px;font-size:9px;transform:scaleX(0.9811);transform-origin:0 0;color:#e0e0e0;">Editing</div>
<div class="t" style="left:1114.5px;top:200.48px;font-size:9px;transform:scaleX(0.9811);transform-origin:0 0;color:#c4c4c4;">Editing</div>
<div style="position:absolute;left:622.6px;top:219px;width:96.8px;height:21.500px;border:1px solid #4e4e4e;border-radius:3.500px;background:#1f1f1f"></div>
<div style="position:absolute;left:736px;top:219px;width:64.5px;height:21.500px;border:1px solid #4e4e4e;border-radius:3.500px;background:#1f1f1f"></div>
<div style="position:absolute;left:803.5px;top:219px;width:365.5px;height:21.500px;border:1px solid #4e4e4e;border-radius:3.500px;background:#1f1f1f"></div>
<div class="t" style="left:630px;top:226.26px;font-size:10.8px;transform:scaleX(0.9842);transform-origin:0 0;color:#e8e8e8;">D10</div>
<div class="t" style="left:783px;top:223.38px;font-size:14px;color:#f0f0f0;font-style:italic;font-family:'Liberation Serif',serif;">fx</div>
<div style="position:absolute;left:646.5px;top:262px;width:510.5px;height:648px;background:#fff;"></div>
<div class="t" style="left:698.26px;top:247.92px;font-size:11.2px;color:#e8e8e8;">A</div>
<div class="t" style="left:925.26px;top:247.92px;font-size:11.2px;color:#e8e8e8;">B</div>
<div style="position:absolute;left:646px;top:245px;width:1px;height:17px;background:#3a3a3a;"></div>
<div style="position:absolute;left:756px;top:245px;width:1px;height:17px;background:#3a3a3a;"></div>
<div style="position:absolute;left:1099px;top:245px;width:1px;height:17px;background:#3a3a3a;"></div>
<div class="t" style="left:628.39px;top:266.92px;font-size:11.2px;color:#e8e8e8;">1</div>
<div class="t" style="left:628.39px;top:284.48px;font-size:11.2px;color:#e8e8e8;">2</div>
<div class="t" style="left:628.39px;top:302.03px;font-size:11.2px;color:#e8e8e8;">3</div>
<div class="t" style="left:628.39px;top:319.59px;font-size:11.2px;color:#e8e8e8;">4</div>
<div class="t" style="left:628.39px;top:337.14px;font-size:11.2px;color:#e8e8e8;">5</div>
<div class="t" style="left:628.39px;top:354.7px;font-size:11.2px;color:#e8e8e8;">6</div>
<div class="t" style="left:628.39px;top:372.26px;font-size:11.2px;color:#e8e8e8;">7</div>
<div class="t" style="left:628.39px;top:389.81px;font-size:11.2px;color:#e8e8e8;">8</div>
<div class="t" style="left:628.39px;top:407.37px;font-size:11.2px;color:#e8e8e8;">9</div>
<div style="position:absolute;left:616px;top:421.2px;width:30.5px;height:17.6px;background:linear-gradient(90deg,#a9d8c0,#d5efe1);"></div>
<div class="t" style="left:625.27px;top:424.92px;font-size:11.2px;color:#1a7044;font-weight:bold;">10</div>
<div class="t" style="left:625.69px;top:442.48px;font-size:11.2px;color:#e8e8e8;">11</div>
<div class="t" style="left:625.27px;top:460.04px;font-size:11.2px;color:#e8e8e8;">12</div>
<div class="t" style="left:625.27px;top:477.59px;font-size:11.2px;color:#e8e8e8;">13</div>
<div class="t" style="left:625.27px;top:495.15px;font-size:11.2px;color:#e8e8e8;">14</div>
<div class="t" style="left:625.27px;top:512.7px;font-size:11.2px;color:#e8e8e8;">15</div>
<div class="t" style="left:625.27px;top:530.26px;font-size:11.2px;color:#e8e8e8;">16</div>
<div class="t" style="left:625.27px;top:547.82px;font-size:11.2px;color:#e8e8e8;">17</div>
<div class="t" style="left:625.27px;top:565.37px;font-size:11.2px;color:#e8e8e8;">18</div>
<div class="t" style="left:625.27px;top:582.93px;font-size:11.2px;color:#e8e8e8;">19</div>
<div class="t" style="left:625.27px;top:600.48px;font-size:11.2px;color:#e8e8e8;">20</div>
<div class="t" style="left:625.27px;top:618.04px;font-size:11.2px;color:#e8e8e8;">21</div>
<div class="t" style="left:625.27px;top:635.6px;font-size:11.2px;color:#e8e8e8;">22</div>
<div class="t" style="left:625.27px;top:653.15px;font-size:11.2px;color:#e8e8e8;">23</div>
<div class="t" style="left:625.27px;top:670.71px;font-size:11.2px;color:#e8e8e8;">24</div>
<div class="t" style="left:625.27px;top:688.26px;font-size:11.2px;color:#e8e8e8;">25</div>
<div class="t" style="left:625.27px;top:705.82px;font-size:11.2px;color:#e8e8e8;">26</div>
<div class="t" style="left:625.27px;top:723.38px;font-size:11.2px;color:#e8e8e8;">27</div>
<div class="t" style="left:625.27px;top:740.93px;font-size:11.2px;color:#e8e8e8;">28</div>
<div class="t" style="left:625.27px;top:758.49px;font-size:11.2px;color:#e8e8e8;">29</div>
<div class="t" style="left:625.27px;top:776.04px;font-size:11.2px;color:#e8e8e8;">30</div>
<div class="t" style="left:625.27px;top:793.6px;font-size:11.2px;color:#e8e8e8;">31</div>
<div class="t" style="left:625.27px;top:811.16px;font-size:11.2px;color:#e8e8e8;">32</div>
<div class="t" style="left:625.27px;top:828.71px;font-size:11.2px;color:#e8e8e8;">33</div>
<div class="t" style="left:625.27px;top:846.27px;font-size:11.2px;color:#e8e8e8;">34</div>
<div class="t" style="left:625.27px;top:863.82px;font-size:11.2px;color:#e8e8e8;">35</div>
<div class="t" style="left:625.27px;top:881.38px;font-size:11.2px;color:#e8e8e8;">36</div>
<div class="t" style="left:625.27px;top:898.94px;font-size:11.2px;color:#e8e8e8;">37</div>
<div style="position:absolute;left:1158.5px;top:246px;width:11.5px;height:664px;background:#262626;border-radius:5.500px"></div>
<div style="position:absolute;left:1161.3px;top:262px;width:6px;height:116px;background:#7d7d7d;border-radius:3px"></div>
<div style="position:absolute;left:646.5px;top:909.3px;width:510.5px;height:2.4px;background:#9d9d9d;"></div>
<div style="position:absolute;left:677.5px;top:909px;width:53px;height:25.5px;background:#fff;border-radius:0 0 5px 5px"></div>
<div class="t" style="left:690.5px;top:917.37px;font-size:11.5px;transform:scaleX(0.9212);transform-origin:0 0;color:#222;">Sales</div>
<div style="position:absolute;left:690px;top:929.3px;width:27.5px;height:1.8px;background:#1a7f4b;"></div>
<div class="t" style="left:739.5px;top:917.37px;font-size:11.5px;transform:scaleX(0.9844);transform-origin:0 0;color:#ececec;">Projections</div>
<div style="position:absolute;left:920px;top:916px;width:237.5px;height:14.5px;background:#2b2b2b;border-radius:7px"></div>
<div style="position:absolute;left:935px;top:920.5px;width:117.5px;height:5.5px;background:#a0a0a0;border-radius:3px"></div>
<div style="position:absolute;left:614px;top:937.2px;width:556.5px;height:23px;background:#101010;"></div>
<div class="t" style="left:624.5px;top:943.31px;font-size:10.5px;transform:scaleX(0.9225);transform-origin:0 0;color:#d0d0d0;">Ready</div>
<div class="t" style="left:668px;top:943.31px;font-size:10.5px;transform:scaleX(0.9891);transform-origin:0 0;color:#d0d0d0;">Workbook Statistics</div>
<div style="position:absolute;left:927px;top:938px;width:31.5px;height:21px;background:#1c1c1c;"></div>
<div class="t" style="left:1146.5px;top:943.31px;font-size:10.5px;transform:scaleX(0.9279);transform-origin:0 0;color:#d4d4d4;">86%</div>
<svg style="left:0;top:0" width="1781" height="1056" viewBox="0 0 1781 1056"><g><path d="M635 67h7.200c.5 0 .8.300.8.800V70h-8z" fill="#21a366"/><path d="M635 70h8v3h-8z" fill="#107c41"/><path d="M635 73h8v3h-8z" fill="#185c37"/><path d="M635 76h8v2.200c0 .5-.3.800-.8.800H635z" fill="#0e5c2f"/><path d="M639 67v12" stroke="#33c481" stroke-width=".6" opacity=".5"/><rect x="631.200" y="69.200" width="7.600" height="7.600" rx=".8" fill="#107c41"/><text x="632.700" y="75.400" font-size="6.200" font-weight="bold" fill="#fff" font-family="Liberation Sans,sans-serif">X</text></g>
<g fill="none" stroke="#f0f0f0" stroke-width="1.500"><circle cx="989" cy="71.800" r="4.600"/><path d="M985.700 75.200l-4.600 4.600"/></g>
<g><clipPath id="xa"><circle cx="1027.8" cy="73" r="12.5"/></clipPath><g clip-path="url(#xa)"><g transform="translate(1027.8 73) scale(1)"><rect x="-13" y="-13" width="26" height="26" fill="#ededee"/><path d="M-10 13c.2-3.400 2.400-5 5.400-5.600l2.400-.6h4.400l2.400.6c3 .6 5.200 2.200 5.400 5.600z" fill="#e04f28"/><path d="M-2 7.600h4l-.8 5.400h-2.400z" fill="#f1f1f1"/><path d="M-2.400 3.500h4.800v4.300l-2.400 1.600-2.400-1.600z" fill="#cf9a7c"/><ellipse cx="0" cy="-2" rx="4.900" ry="6.300" fill="#e0ad90"/><path d="M-4.900 -1.800c0 4.600 2 7.200 4.900 7.200s4.900-2.600 4.900-7.200c-.9 2.200-1.700 3.100-2.800 3.300-.7-.6-1.300-.8-2.100-.8s-1.400.2-2.100.8c-1.100-.2-1.900-1.100-2.800-3.300z" fill="#8d4d2f"/><path d="M-5.100 -3c-.8-4.600 1.500-7.800 5.100-7.800 1.500-.9 3 .1 3.400.9 1.600 1.300 2.200 3.700 1.700 6.900-.5-2.200-1.400-3.700-2.900-4.200-1.400.5-3 .5-4.400 0-1.500.5-2.400 2-2.900 4.200z" fill="#5a3422"/></g></g></g>
<path d="M1066 73h9.500" stroke="#f0f0f0" stroke-width="1.200"/><rect x="1107.500" y="68.500" width="8.600" height="8.600" rx=".8" fill="none" stroke="#f0f0f0" stroke-width="1.200"/><path d="M1149.500 68.200l9.600 9.600M1159.100 68.200l-9.600 9.600" stroke="#f0f0f0" stroke-width="1.200"/>
<path d="M611.800 52h8.400l-4.200 4z" fill="#10204c"/><path d="M612 960.200l4.200-4.600 1 4.600z" fill="#1a36a4"/>
<path d="M938 110.3l2.4 2.4 2.4-2.4" fill="none" stroke="#dcdcdc" stroke-width="1.1"/>
<g fill="none" stroke="#e4e4e4" stroke-width="1.100" stroke-linejoin="round"><path d="M1019 105.500h-8v6.600h1.800v2.500l2.900-2.500h6v-3"/><circle cx="1021.600" cy="105.800" r="2.200" fill="#2a2a2a"/></g>
<g fill="none" stroke="#fff" stroke-width="1.100" stroke-linejoin="round" stroke-linecap="round"><path d="M1103.500 106.400h-2.600c-.7 0-1.200.5-1.200 1.200v6c0 .7.500 1.200 1.200 1.200h8c.7 0 1.200-.5 1.200-1.200v-1.600"/><path d="M1108.400 104.500l3.800 3.500-3.800 3.500v-2.200c-3 0-4.300.9-5.300 2.500.2-3.200 1.900-5 5.300-5.200z"/></g>
<path d="M1150.400 108.300l4.400 4.200 4.400-4.200" fill="none" stroke="#fff" stroke-width="1.300"/>
<g transform="translate(0 -0.6)">
<g fill="none" stroke="#e6e6e6" stroke-width="1.3" stroke-linecap="round" stroke-linejoin="round"><path d="M634.1 134.2v5.8h5.8"/><path d="M634.5 139.6c2.6-3.4 8-4.4 10.6-.8 2.4 3.6-.6 6.6-5.6 9"/></g>
<g fill="none" stroke="#5a5a5a" stroke-width="1.3" stroke-linecap="round" stroke-linejoin="round"><path d="M646.1 156.8v5.8h-5.8"/><path d="M645.7 162.2c-2.6-3.4-8-4.4-10.6-.8-2.4 3.6.6 6.6 5.6 9"/></g>
<g transform="translate(563.5 0)"><path d="M110.7 138.2h16.6v18.2h-16.6z" fill="none" stroke="#e9a441" stroke-width="2"/><path d="M115 138.6v-2.2h2.2c.2-1.6 1.2-2.8 2.9-2.8s2.7 1.2 2.9 2.8h2.2v2.2z" fill="#272727" stroke="#e8e8e8" stroke-width="1"/><rect x="123" y="144.2" width="11.4" height="14.2" fill="#272727" stroke="#e8e8e8" stroke-width="1.3"/></g>
<path d="M680.9 182l2.6 2.6 2.6-2.6" fill="none" stroke="#e0e0e0" stroke-width="1.2"/>
<g transform="translate(563.5 0)" fill="none"><path d="M147.6 133.5l4.6 10.4M152.6 133.5l-4.6 10.4" stroke="#e8e8e8" stroke-width="1.1"/><circle cx="147.4" cy="145.3" r="1.5" stroke="#3a8fd8" stroke-width="1"/><circle cx="152.8" cy="145.3" r="1.5" stroke="#3a8fd8" stroke-width="1"/></g>
<g transform="translate(563.5 0)" fill="none" stroke="#e8e8e8" stroke-width="1.1"><path d="M147.5 165.5h-4v-9h5.2v1.6"/><path d="M147.5 158.6h5.4l3.6 3.6v7.2h-9z"/><path d="M150 166h4" stroke-width=".8"/></g>
<g transform="translate(563.5 0)"><path d="M144 186.2l7.4-4.2 3.6 5.4-5.8 4.4z" fill="#e9a441"/><path d="M144 186.2l7.4-4.2 1.4 2.1-7.2 4.2z" fill="#272727" stroke="#e8e8e8" stroke-width=".9"/><path d="M151.2 182.6l3.4-3.8 2.2 1.4-2.6 4.4z" fill="#272727" stroke="#e8e8e8" stroke-width=".9"/></g>
<g transform="translate(719.5 201.5)"><rect x="0" y="0" width="6.400" height="6.400" fill="#c6c6c6"/><path d="M1.300 4.200V1.300h2.900" fill="none" stroke="#272727" stroke-width="1"/><path d="M2 2l2.700 2.700" stroke="#272727" stroke-width=".9"/><path d="M3.200 5h1.800V3.200" fill="none" stroke="#272727" stroke-width=".8"/></g>
<g transform="translate(869.5 201.5)"><rect x="0" y="0" width="6.400" height="6.400" fill="#c6c6c6"/><path d="M1.300 4.200V1.300h2.900" fill="none" stroke="#272727" stroke-width="1"/><path d="M2 2l2.700 2.700" stroke="#272727" stroke-width=".9"/><path d="M3.200 5h1.800V3.200" fill="none" stroke="#272727" stroke-width=".8"/></g>
</g>
<path d="M828.1 139.8l2.4 2.4 2.4-2.4" fill="none" stroke="#e0e0e0" stroke-width="1.1"/>
<path d="M864.1 139.8l2.4 2.4 2.4-2.4" fill="none" stroke="#e0e0e0" stroke-width="1.1"/>
<path d="M807.7 163.6l2.4 2.4 2.4-2.4" fill="none" stroke="#e0e0e0" stroke-width="1.1"/>
<path d="M829.200 160.800l2.400-2.300 2.400 2.300" fill="none" stroke="#2b88d8" stroke-width="1.200"/>
<path d="M850.300 158.700l2.300 2.200 2.300-2.200" fill="none" stroke="#2b88d8" stroke-width="1.200"/>
<g fill="none" stroke="#d0d0d0"><rect x="742.400" y="182.400" width="13" height="13" stroke-width="1" stroke-dasharray="1.200 1"/><path d="M742.400 195.400h13" stroke-width="1.300"/><path d="M748.900 182.400v13M742.400 188.900h13" stroke-width="1.200"/></g>
<path d="M762.2 188l2.4 2.4 2.4-2.4" fill="none" stroke="#e0e0e0" stroke-width="1.1"/>
<g fill="none" stroke="#f0f0f0" stroke-width="1.150" stroke-linejoin="round"><path d="M778.400 187.600l5.200-5.200 4 4-5.200 5.200z"/><path d="M781.700 181.600l2.600 2.400"/></g><path d="M787.400 185.600c1.200 1.600 1.400 2.600.6 3.400-.6.600-1.600.2-1.400-1z" fill="#2b88d8"/><rect x="775.600" y="192.400" width="14.300" height="3.400" fill="#a9dcc3"/>
<path d="M795.7 188l2.4 2.4 2.4-2.4" fill="none" stroke="#e0e0e0" stroke-width="1.1"/>
<rect x="808.500" y="192.300" width="15.500" height="3.500" fill="#ee1111"/>
<path d="M829.1 188l2.4 2.4 2.4-2.4" fill="none" stroke="#e0e0e0" stroke-width="1.1"/>
<g transform="translate(870.300 201.500)"><rect x="0" y="0" width="6.400" height="6.400" fill="#c6c6c6"/><path d="M1.300 4.200V1.300h2.900" fill="none" stroke="#272727" stroke-width="1"/><path d="M2 2l2.700 2.700" stroke="#272727" stroke-width=".9"/><path d="M3.200 5h1.800V3.200" fill="none" stroke="#272727" stroke-width=".8"/></g>
<path d="M896 135.800h25M899.400 140.400h17.500M896 144.800h25M899.400 149.200h17.500M896 153.600h25" stroke="#e8e8e8" stroke-width="1.250"/>
<path d="M905.1 183.3l2.4 2.4 2.4-2.4" fill="none" stroke="#e0e0e0" stroke-width="1.1"/>
<g fill="none" stroke="#ececec" stroke-width="1.400"><circle cx="956.900" cy="139.400" r="3.700"/><circle cx="969.900" cy="151" r="4.100"/><path d="M970.800 134.200l-13.700 21.800"/></g>
<path d="M960.1 183.3l2.4 2.4 2.4-2.4" fill="none" stroke="#e0e0e0" stroke-width="1.1"/>
<g><rect x="1010.300" y="135.300" width="15.300" height="11.300" fill="#106ebe"/><path d="M1010.300 135.800h15.300" stroke="#4aa8ff" stroke-width="1"/><g fill="none" stroke="#a6a6a6" stroke-width="1.200"><rect x="1005.800" y="131.300" width="24.700" height="19.300"/><path d="M1005.800 135.300h24.700M1005.800 146.600h24.700M1010.300 131.300v19.300M1025.600 131.300v19.300"/></g><path d="M1032.400 137.200c.7.500.7 1.300.2 2l-8.200 10.200-2.200-1.700 8.200-10.200c.5-.7 1.300-.8 2-.3z" fill="#272727" stroke="#e8e8e8" stroke-width="1"/><path d="M1013 155c2 .3 3.600-.7 4.600-2.300 1-1.500 2.300-1.800 3.500-1 1.200.9 1.300 2.300.2 3.700-1.700 2-5.200 2.300-8.300-.4z" fill="#2f8fe0"/></g>
<path d="M1015.6 183.3l2.4 2.4 2.4-2.4" fill="none" stroke="#e0e0e0" stroke-width="1.1"/>
<g><rect x="1068.300" y="141.900" width="12.100" height="6.200" fill="#106ebe"/><g fill="none" stroke="#ececec" stroke-width="1.200"><rect x="1062.200" y="135.100" width="24.600" height="19.400"/><path d="M1062.200 141.900h24.600M1062.200 148.100h24.600M1068.300 135.100v19.400M1080.400 135.100v19.400"/></g><path d="M1067.300 132.400h13.900M1067.300 131v2.800M1081.200 131v2.800" stroke="#3a96e8" stroke-width="1" fill="none"/></g>
<path d="M1070.6 183.3l2.4 2.4 2.4-2.4" fill="none" stroke="#e0e0e0" stroke-width="1.1"/>
<g fill="none" stroke="#ececec" stroke-width="1.500"><circle cx="1131.600" cy="141.200" r="8"/><path d="M1126 147l-10.500 10.500"/></g>
<path d="M1124.1 183.3l2.4 2.4 2.4-2.4" fill="none" stroke="#e0e0e0" stroke-width="1.1"/>
<path d="M1154.800 199.400l4.600 4.400 4.600-4.400" fill="none" stroke="#e6e6e6" stroke-width="1.300"/>
<path d="M706 228l3.600 3.600 3.600-3.600" fill="none" stroke="#e0e0e0" stroke-width="1.200"/>
<g fill="#c8c8c8"><circle cx="728" cy="225.400" r="1"/><circle cx="728" cy="229.600" r="1"/><circle cx="728" cy="233.800" r="1"/></g>
<path d="M742 224.200l10.400 10.600M752.400 224.200L742 234.800" stroke="#e03a3a" stroke-width="1.300"/><path d="M762.500 230.200l4.200 4.400 9-10" fill="none" stroke="#3aa655" stroke-width="1.400"/>
<path d="M632 258.400l12.600-11.400v11.400z" fill="#6e6e6e"/>
<path d="M616 280.1h30.500M616 297.66h30.500M616 315.21h30.500M616 332.77h30.500M616 350.32h30.500M616 367.88h30.500M616 385.44h30.500M616 402.99h30.500M616 420.55h30.500M616 438.1h30.500M616 455.66h30.500M616 473.22h30.500M616 490.77h30.500M616 508.33h30.500M616 525.88h30.500M616 543.44h30.500M616 561h30.500M616 578.55h30.500M616 596.11h30.500M616 613.66h30.500M616 631.22h30.500M616 648.78h30.500M616 666.33h30.500M616 683.89h30.500M616 701.44h30.500M616 719h30.500M616 736.56h30.500M616 754.11h30.500M616 771.67h30.500M616 789.22h30.500M616 806.78h30.500M616 824.34h30.500M616 841.89h30.500M616 859.45h30.500M616 877h30.500M616 894.56h30.500" stroke="#3a3a3a" stroke-width="1" fill="none"/>
<path d="M646.500 280.1h510.500M646.500 297.66h510.500M646.500 315.21h510.500M646.500 332.77h510.500M646.500 350.32h510.500M646.500 367.88h510.500M646.500 385.44h510.500M646.500 402.99h510.500M646.500 420.55h510.500M646.500 438.1h510.500M646.500 455.66h510.500M646.500 473.22h510.500M646.500 490.77h510.500M646.500 508.33h510.500M646.500 525.88h510.500M646.500 543.44h510.500M646.500 561h510.500M646.500 578.55h510.500M646.500 596.11h510.500M646.500 613.66h510.500M646.500 631.22h510.500M646.500 648.78h510.500M646.500 666.33h510.500M646.500 683.89h510.500M646.500 701.44h510.500M646.500 719h510.500M646.500 736.56h510.500M646.500 754.11h510.500M646.500 771.67h510.500M646.500 789.22h510.500M646.500 806.78h510.500M646.500 824.34h510.500M646.500 841.89h510.500M646.500 859.45h510.500M646.500 877h510.500M646.500 894.56h510.500M646.500 912.12h510.500M756.500 262v648M1099.500 262v648" stroke="#dcdcdc" stroke-width="1" fill="none"/>
<clipPath id="chc"><rect x="657" y="271.400" width="500" height="522.700"/></clipPath><g clip-path="url(#chc)"><rect x="657" y="271.400" width="500" height="522.700" fill="#424c40"/><circle cx="1165" cy="438.400" r="110" fill="none" stroke="#a4dabd" stroke-width="44.200"/><rect x="1002" y="639.800" width="155" height="154.300" fill="#73827a"/><path d="M701.500 298.2h287.500" stroke="#e6ece6" stroke-width="1.100" stroke-dasharray="1.100 3.150" fill="none"/><text x="693.300" y="300.5" text-anchor="end" font-size="7.700" font-family="Liberation Serif,serif" fill="#fbfdfb" stroke="#fbfdfb" stroke-width=".15">30%</text><path d="M701.500 331.6h287.500" stroke="#e6ece6" stroke-width="1.100" stroke-dasharray="1.100 3.150" fill="none"/><text x="693.300" y="333.9" text-anchor="end" font-size="7.700" font-family="Liberation Serif,serif" fill="#fbfdfb" stroke="#fbfdfb" stroke-width=".15">25%</text><path d="M701.500 365h287.500" stroke="#e6ece6" stroke-width="1.100" stroke-dasharray="1.100 3.150" fill="none"/><text x="693.300" y="367.3" text-anchor="end" font-size="7.700" font-family="Liberation Serif,serif" fill="#fbfdfb" stroke="#fbfdfb" stroke-width=".15">20%</text><path d="M701.500 398.4h287.500" stroke="#e6ece6" stroke-width="1.100" stroke-dasharray="1.100 3.150" fill="none"/><text x="693.300" y="400.7" text-anchor="end" font-size="7.700" font-family="Liberation Serif,serif" fill="#fbfdfb" stroke="#fbfdfb" stroke-width=".15">15%</text><path d="M701.500 431.8h287.500" stroke="#e6ece6" stroke-width="1.100" stroke-dasharray="1.100 3.150" fill="none"/><text x="693.300" y="434.1" text-anchor="end" font-size="7.700" font-family="Liberation Serif,serif" fill="#fbfdfb" stroke="#fbfdfb" stroke-width=".15">10%</text><path d="M701.500 465.2h287.500" stroke="#e6ece6" stroke-width="1.100" stroke-dasharray="1.100 3.150" fill="none"/><text x="693.300" y="467.5" text-anchor="end" font-size="7.700" font-family="Liberation Serif,serif" fill="#fbfdfb" stroke="#fbfdfb" stroke-width=".15">5%</text><path d="M701.500 498.6h287.500" stroke="#e6ece6" stroke-width="1.100" stroke-dasharray="1.100 3.150" fill="none"/><text x="693.300" y="500.9" text-anchor="end" font-size="7.700" font-family="Liberation Serif,serif" fill="#fbfdfb" stroke="#fbfdfb" stroke-width=".15">0%</text><rect x="709.9" y="427.9" width="28.300" height="32" fill="#a4dabd"/><rect x="709.9" y="459.9" width="28.300" height="42.5" fill="#c6e9d6"/><rect x="750.32" y="313" width="28.300" height="80" fill="#a4dabd"/><rect x="750.32" y="393" width="28.300" height="109.4" fill="#c6e9d6"/><rect x="790.74" y="339.9" width="28.300" height="32" fill="#a4dabd"/><rect x="790.74" y="371.9" width="28.300" height="130.5" fill="#c6e9d6"/><rect x="831.16" y="350.7" width="28.300" height="21.8" fill="#a4dabd"/><rect x="831.16" y="372.5" width="28.300" height="129.9" fill="#c6e9d6"/><rect x="871.58" y="362.9" width="28.300" height="14.1" fill="#a4dabd"/><rect x="871.58" y="377" width="28.300" height="125.4" fill="#c6e9d6"/><rect x="912" y="442.3" width="28.300" height="38.4" fill="#a4dabd"/><rect x="912" y="480.7" width="28.300" height="21.7" fill="#c6e9d6"/><rect x="952.42" y="477.2" width="28.300" height="13.4" fill="#a4dabd"/><rect x="952.42" y="490.6" width="28.300" height="11.8" fill="#c6e9d6"/><text x="724.05" y="513.700" text-anchor="middle" font-size="7.700" font-family="Liberation Serif,serif" fill="#fbfdfb" stroke="#fbfdfb" stroke-width=".15">5 - 9</text><text x="764.47" y="513.700" text-anchor="middle" font-size="7.700" font-family="Liberation Serif,serif" fill="#fbfdfb" stroke="#fbfdfb" stroke-width=".15">10 - 14</text><text x="804.89" y="513.700" text-anchor="middle" font-size="7.700" font-family="Liberation Serif,serif" fill="#fbfdfb" stroke="#fbfdfb" stroke-width=".15">15 - 19</text><text x="845.31" y="513.700" text-anchor="middle" font-size="7.700" font-family="Liberation Serif,serif" fill="#fbfdfb" stroke="#fbfdfb" stroke-width=".15">20 - 24</text><text x="885.73" y="513.700" text-anchor="middle" font-size="7.700" font-family="Liberation Serif,serif" fill="#fbfdfb" stroke="#fbfdfb" stroke-width=".15">25 - 29</text><text x="926.15" y="513.700" text-anchor="middle" font-size="7.700" font-family="Liberation Serif,serif" fill="#fbfdfb" stroke="#fbfdfb" stroke-width=".15">30 - 35</text><text x="966.57" y="513.700" text-anchor="middle" font-size="7.700" font-family="Liberation Serif,serif" fill="#fbfdfb" stroke="#fbfdfb" stroke-width=".15">36 - 40</text><path d="M701.500 561h287.500" stroke="#e6ece6" stroke-width="1.100" stroke-dasharray="1.100 3.150" fill="none"/><text x="693.300" y="563.3" text-anchor="end" font-size="7.700" font-family="Liberation Serif,serif" fill="#fbfdfb" stroke="#fbfdfb" stroke-width=".15">100%</text><path d="M701.500 594.37h287.500" stroke="#e6ece6" stroke-width="1.100" stroke-dasharray="1.100 3.150" fill="none"/><text x="693.300" y="596.67" text-anchor="end" font-size="7.700" font-family="Liberation Serif,serif" fill="#fbfdfb" stroke="#fbfdfb" stroke-width=".15">90%</text><path d="M701.500 627.74h287.500" stroke="#e6ece6" stroke-width="1.100" stroke-dasharray="1.100 3.150" fill="none"/><text x="693.300" y="630.04" text-anchor="end" font-size="7.700" font-family="Liberation Serif,serif" fill="#fbfdfb" stroke="#fbfdfb" stroke-width=".15">80%</text><path d="M701.500 661.11h287.500" stroke="#e6ece6" stroke-width="1.100" stroke-dasharray="1.100 3.150" fill="none"/><text x="693.300" y="663.41" text-anchor="end" font-size="7.700" font-family="Liberation Serif,serif" fill="#fbfdfb" stroke="#fbfdfb" stroke-width=".15">70%</text><path d="M701.500 694.48h287.500" stroke="#e6ece6" stroke-width="1.100" stroke-dasharray="1.100 3.150" fill="none"/><text x="693.300" y="696.78" text-anchor="end" font-size="7.700" font-family="Liberation Serif,serif" fill="#fbfdfb" stroke="#fbfdfb" stroke-width=".15">60%</text><path d="M701.500 727.85h287.500" stroke="#e6ece6" stroke-width="1.100" stroke-dasharray="1.100 3.150" fill="none"/><text x="693.300" y="730.15" text-anchor="end" font-size="7.700" font-family="Liberation Serif,serif" fill="#fbfdfb" stroke="#fbfdfb" stroke-width=".15">50%</text><path d="M701.500 761.22h287.500" stroke="#e6ece6" stroke-width="1.100" stroke-dasharray="1.100 3.150" fill="none"/><text x="693.300" y="763.52" text-anchor="end" font-size="7.700" font-family="Liberation Serif,serif" fill="#fbfdfb" stroke="#fbfdfb" stroke-width=".15">0%</text><rect x="709.9" y="651.6" width="28.300" height="32" fill="#a4dabd"/><rect x="709.9" y="683.6" width="28.300" height="81.6" fill="#c6e9d6"/><rect x="750.32" y="565.8" width="28.300" height="50.6" fill="#a4dabd"/><rect x="750.32" y="616.4" width="28.300" height="148.8" fill="#c6e9d6"/><rect x="790.74" y="578" width="28.300" height="32.3" fill="#a4dabd"/><rect x="790.74" y="610.3" width="28.300" height="154.9" fill="#c6e9d6"/><rect x="831.16" y="610.6" width="28.300" height="60.5" fill="#a4dabd"/><rect x="831.16" y="671.1" width="28.300" height="94.1" fill="#c6e9d6"/><rect x="871.58" y="599.1" width="28.300" height="35.5" fill="#a4dabd"/><rect x="871.58" y="634.6" width="28.300" height="130.6" fill="#c6e9d6"/><rect x="912" y="689.7" width="28.300" height="38.7" fill="#a4dabd"/><rect x="912" y="728.4" width="28.300" height="36.8" fill="#c6e9d6"/><rect x="952.42" y="707" width="28.300" height="29.4" fill="#a4dabd"/><rect x="952.42" y="736.4" width="28.300" height="28.8" fill="#c6e9d6"/><path d="M702 757 L724.05 651.6 L764.47 565.8 L804.89 578 L845.31 610.6 L885.73 599.1 L926.15 689.7 L966.57 707 L986 752" fill="none" stroke="#2f9463" stroke-width=".75"/><circle cx="724.05" cy="651.6" r="1.500" fill="#2f9463"/><circle cx="764.47" cy="565.8" r="1.500" fill="#2f9463"/><circle cx="804.89" cy="578" r="1.500" fill="#2f9463"/><circle cx="845.31" cy="610.6" r="1.500" fill="#2f9463"/><circle cx="885.73" cy="599.1" r="1.500" fill="#2f9463"/><circle cx="926.15" cy="689.7" r="1.500" fill="#2f9463"/><circle cx="966.57" cy="707" r="1.500" fill="#2f9463"/><text x="724.05" y="777" text-anchor="middle" font-size="7.700" font-family="Liberation Serif,serif" fill="#fbfdfb" stroke="#fbfdfb" stroke-width=".15">5 - 9</text><text x="764.47" y="777" text-anchor="middle" font-size="7.700" font-family="Liberation Serif,serif" fill="#fbfdfb" stroke="#fbfdfb" stroke-width=".15">10 - 14</text><text x="804.89" y="777" text-anchor="middle" font-size="7.700" font-family="Liberation Serif,serif" fill="#fbfdfb" stroke="#fbfdfb" stroke-width=".15">15 - 19</text><text x="845.31" y="777" text-anchor="middle" font-size="7.700" font-family="Liberation Serif,serif" fill="#fbfdfb" stroke="#fbfdfb" stroke-width=".15">20 - 24</text><text x="885.73" y="777" text-anchor="middle" font-size="7.700" font-family="Liberation Serif,serif" fill="#fbfdfb" stroke="#fbfdfb" stroke-width=".15">25 - 29</text><text x="926.15" y="777" text-anchor="middle" font-size="7.700" font-family="Liberation Serif,serif" fill="#fbfdfb" stroke="#fbfdfb" stroke-width=".15">30 - 35</text><text x="966.57" y="777" text-anchor="middle" font-size="7.700" font-family="Liberation Serif,serif" fill="#fbfdfb" stroke="#fbfdfb" stroke-width=".15">36 - 40</text><text x="1034" y="574.800" font-size="9.200" fill="#fff" font-family="Liberation Serif,serif" stroke="#fff" stroke-width=".2">74%</text><path d="M1058 563l16-18" stroke="#45b07a" stroke-width="1" stroke-dasharray="1 1.500" fill="none"/><circle cx="1075.700" cy="614.500" r="2.600" fill="#8fd3b2"/><text x="1083" y="616.700" font-size="6.700" fill="#f4f9f5" font-family="Liberation Sans,sans-serif" textLength="36" lengthAdjust="spacingAndGlyphs">: New Sales</text><circle cx="1137.500" cy="614.500" r="2.600" fill="#cdeedd"/><text x="1145" y="616.700" font-size="6.700" fill="#f4f9f5" font-family="Liberation Sans,sans-serif">: Customers</text><text x="1017.800" y="658.300" font-size="7" fill="#bfe8d2" font-family="Liberation Sans,sans-serif" textLength="27" lengthAdjust="spacingAndGlyphs">Contoso</text><text x="1089.500" y="658.300" font-size="7" fill="#bfe8d2" font-family="Liberation Sans,sans-serif" textLength="81" lengthAdjust="spacingAndGlyphs">FY 22 Company Overview</text><path d="M1016 675h142" stroke="#dfe8e2" stroke-width="1" stroke-dasharray="1 2.400" fill="none"/><text x="1016" y="704.300" font-size="14.200" fill="#f4f7f5" font-family="Liberation Sans,sans-serif" textLength="159" lengthAdjust="spacingAndGlyphs">Contoso Sales Projections</text></g>
<path d="M1160.800 255l3.600-5.200 3.600 5.200z" fill="#9a9a9a"/><path d="M1160.800 899.500l3.600 5.200 3.600-5.200z" fill="#9a9a9a"/>
<path d="M635 918.500l-4.200 4.500 4.200 4.500M652.500 918.500l4.200 4.500-4.200 4.500" fill="none" stroke="#e0e0e0" stroke-width="1.300"/>
<path d="M805 923h10M810 918v10" stroke="#e0e0e0" stroke-width="1.200"/>
<g fill="#d0d0d0"><circle cx="903" cy="918.800" r="1"/><circle cx="903" cy="923" r="1"/><circle cx="903" cy="927.200" r="1"/></g>
<path d="M929.500 919.500v7l-5.500-3.500zM1146 919.500v7l5.500-3.500z" fill="#a6a6a6"/>
<g fill="none" stroke="#e0e0e0" stroke-width="1"><rect x="936.500" y="942" width="11" height="11"/><path d="M940.200 942v11M943.800 942v11M936.500 945.700h11M936.500 949.300h11"/><rect x="969.500" y="942.500" width="11.500" height="11" /><rect x="972" y="944.700" width="6.500" height="6.600"/><path d="M974.200 946v4M976.300 946v4" stroke-width=".7"/><path d="M1002.500 942.500h11.500v11h-11.500zM1002.500 949.300h11.500M1006.500 942.500v6.800M1010 942.500v6.800"/></g>
<path d="M1029 949h5.500" stroke="#e0e0e0" stroke-width="1.600"/><path d="M1038 949h87.500" stroke="#bdbdbd" stroke-width="1"/><rect x="1080" y="942" width="2.800" height="14" fill="#e4e4e4"/><path d="M1129 949h7M1132.500 945.500v7" stroke="#e0e0e0" stroke-width="1.600"/></svg>
<!-- teams -->
<div style="position:absolute;left:1175.7px;top:52px;width:562.3px;height:908.5px;background:#201f1f;border-radius:5px 5px 0 0"></div>
<div style="position:absolute;left:1175.7px;top:52px;width:562.3px;height:30px;background:#2d2c2c;border-radius:5px 5px 0 0"></div>
<div style="position:absolute;left:1175.7px;top:82px;width:562.3px;height:1px;background:#1a1919;"></div>
<div class="t" style="left:1427.8px;top:62.98px;font-size:11.6px;transform:scaleX(0.8943);transform-origin:0 0;color:#8f8d8b;">Ron Thames</div>
<div class="t" style="left:1223.6px;top:98.78px;font-size:14.2px;transform:scaleX(0.9459);transform-origin:0 0;color:#fff;font-weight:bold;">Ron Thames</div>
<div style="position:absolute;left:1706px;top:94.5px;width:1.4px;height:24px;background:#c8c8c8;"></div>
<div style="position:absolute;left:1175.7px;top:127.5px;width:562.3px;height:1px;background:#262525;"></div>
<div style="position:absolute;left:1390px;top:137px;width:309.6px;height:232.3px;background:#3b3c5b;border-radius:3px"></div>
<div class="t" style="left:1403px;top:144.97px;font-size:9.6px;transform:scaleX(0.923);transform-origin:0 0;color:#b5b6c9;">1:08 PM</div>
<div class="t" style="left:1402.6px;top:159.54px;font-size:12px;transform:scaleX(0.9057);transform-origin:0 0;color:#fff;">Hi Ron, I’ve been working on some image ideas for the</div>
<div class="t" style="left:1402.6px;top:175.24px;font-size:12px;transform:scaleX(0.9025);transform-origin:0 0;color:#fff;">upcoming presentation. Jenna sent me this? Thoughts?</div>
<svg style="left:1404.200px;top:197.400px;overflow:hidden" width="281.500" height="158.400" viewBox="50 47 1668 938" preserveAspectRatio="none"><defs><pattern id="sp" width="19" height="19" patternUnits="userSpaceOnUse" patternTransform="rotate(-50)"><rect width="19" height="19" fill="#ecc09c"/><rect y="11" width="19" height="8" fill="#b98360"/></pattern><pattern id="sr" width="19" height="19" patternUnits="userSpaceOnUse" patternTransform="rotate(-50)"><rect width="19" height="19" fill="#e08d73"/><rect y="11" width="19" height="8" fill="#a85644"/></pattern></defs><rect x="50" y="47" width="1668" height="938" fill="#f0ede9"/><path d="M50 47h560l60 123-240 310 115 180-215 275 20 50H50z" fill="#74afd2"/><g fill="#c9c0b8"><path d="M548 660l142-155 85 167z"/><path d="M900 548l160-168 110 190z"/><path d="M1350 395l190-215 160 240z"/><path d="M665 135l70-88h150l45 113z"/><path d="M810 985l95-85 35 85z"/><path d="M1160 985l170-185 90 185z"/></g><g fill="#fbfbfb"><path d="M680 490l105-115 125 205-95 115z"/><path d="M1060 370l135-150 140 250-120 135z"/><path d="M1545 175l150-128h23v345z"/><path d="M890 880l120-110 125 215H950z"/><path d="M1315 795l140-140 150 250-100 80h-80z"/><path d="M545 985l95-110 60 110z"/></g><g fill="#8fa5b0"><path d="M718 492l68-76 90 162-62 72z"/><path d="M1105 372l92-102 110 196-82 92z"/><path d="M1595 185l110-100 13 0v262z"/><path d="M930 885l80-72 98 172H975z"/><path d="M1358 800l100-98 120 200-88 83h-40z"/><path d="M590 985l52-62 38 62z"/></g><g fill="url(#sr)"><path d="M670 170l105 180-230 310-115-180z"/><path d="M660 890l245-290 95 160-190 225H700z"/><path d="M1238 192l135-145h250l-80 125-193 223z"/><path d="M1520 690l198-200v310l-78 85z"/></g><g fill="url(#sp)"><path d="M330 935l215-270 105 185-105 135H350z"/><path d="M805 360l270-310 105 185-280 312z"/><path d="M1040 780l292-315 108 180-280 340h-50z"/><path d="M610 47h125l-70 88z"/><path d="M1560 985l65-70 25 70z"/></g><path d="M430 480l240-310M330 935l215-270" stroke="#7a4030" stroke-width="5" fill="none"/><g stroke="#9a9a98" stroke-width="5" fill="none"><path d="M940 190l-135 160M1330 47l-110 135M1180 600l-145 175M1700 440l-185 215M790 700l-130 160"/></g></svg>
<div style="position:absolute;left:1216.4px;top:385.2px;width:298.6px;height:56.6px;background:#2d2c2c;border-radius:3px"></div>
<div class="t" style="left:1228.5px;top:392.97px;font-size:9.6px;transform:scaleX(0.9401);transform-origin:0 0;color:#a8a6a4;">Ron Thames</div>
<div class="t" style="left:1288px;top:392.97px;font-size:9.6px;transform:scaleX(0.9912);transform-origin:0 0;color:#a8a6a4;">11:19 AM</div>
<div class="t" style="left:1229px;top:407.14px;font-size:12px;transform:scaleX(0.9002);transform-origin:0 0;color:#fff;">Hey Jack. We have been looking for a main image to use</div>
<div class="t" style="left:1229px;top:422.94px;font-size:12px;transform:scaleX(0.9241);transform-origin:0 0;color:#fff;">in our design</div>
<div style="position:absolute;left:1216.4px;top:444.6px;width:322.6px;height:44.4px;background:#2d2c2c;border-radius:3px"></div>
<div class="t" style="left:1229px;top:454.04px;font-size:12px;transform:scaleX(0.9237);transform-origin:0 0;color:#fff;">Do you have time today before our design meeting to source</div>
<div class="t" style="left:1229px;top:469.84px;font-size:12px;transform:scaleX(0.9137);transform-origin:0 0;color:#fff;">an image that we could potentially use?</div>
<div style="position:absolute;left:1216.4px;top:491px;width:283.9px;height:44.5px;background:#2d2c2c;border-radius:3px"></div>
<div class="t" style="left:1230px;top:499.64px;font-size:12px;transform:scaleX(0.9228);transform-origin:0 0;color:#fff;">Would be nice to have something to be able to show</div>
<div class="t" style="left:1230px;top:515.34px;font-size:12px;transform:scaleX(0.9208);transform-origin:0 0;color:#fff;">to the rest of the team for their feedback.</div>
<div style="position:absolute;left:1390px;top:551.2px;width:309.6px;height:233px;background:#3b3c5b;border-radius:3px"></div>
<div class="t" style="left:1403px;top:559.47px;font-size:9.6px;transform:scaleX(0.923);transform-origin:0 0;color:#b5b6c9;">1:08 PM</div>
<div class="t" style="left:1679.8px;top:558.2px;font-size:10.4px;color:#dcdcf2;">1</div>
<div class="t" style="left:1402.6px;top:573.64px;font-size:12px;transform:scaleX(0.9345);transform-origin:0 0;color:#fff;">What do you think about something like this for</div>
<div class="t" style="left:1402.6px;top:589.34px;font-size:12px;transform:scaleX(0.8944);transform-origin:0 0;color:#fff;">the design?</div>
<svg style="left:1403.800px;top:612.300px;overflow:hidden" width="281.900" height="158.400" viewBox="48 43 1670 942" preserveAspectRatio="none"><rect x="48" y="43" width="1670" height="942" fill="#e7e4dd"/><path d="M80 470L520 43h1200v942h-650z" fill="#e6d4bb"/><path d="M80 470l990 515h-60L80 492z" fill="#c4a582"/><path d="M1330 130l390 110v745h-420l60-120 60-400z" fill="#e9e1d3"/><path d="M620 520l180-200 560 250-150 230z" fill="#efe2cf"/><path d="M290 205L350 150L350 178L290 233z" fill="#c5a17b"/><path d="M260 160L290 205L290 233L260 188z" fill="#a8835e"/><path d="M260 160L320 110L350 150L290 205z" fill="#dec4a3"/><path d="M225 300L275 255L275 281L225 326z" fill="#c5a17b"/><path d="M190 255L225 300L225 326L190 281z" fill="#a8835e"/><path d="M190 255L240 205L275 255L225 300z" fill="#dec4a3"/><path d="M120 440L175 410L175 432L120 462z" fill="#c5a17b"/><path d="M80 390L120 440L120 462L80 412z" fill="#a8835e"/><path d="M80 390L130 350L175 410L120 440z" fill="#dec4a3"/><path d="M450 215L510 135L510 161L450 241z" fill="#c5a17b"/><path d="M410 180L450 215L450 241L410 206z" fill="#a8835e"/><path d="M410 180L470 105L510 135L450 215z" fill="#dec4a3"/><path d="M395 300L430 280L430 302L395 322z" fill="#c5a17b"/><path d="M360 250L395 300L395 322L360 272z" fill="#a8835e"/><path d="M360 250L395 225L430 280L395 300z" fill="#dec4a3"/><path d="M680 260L710 215L670 275L640 320z" fill="#c5a17b"/><path d="M530 160L680 260L640 320L490 220z" fill="#a8835e"/><path d="M530 160L560 140L710 215L680 260z" fill="#dec4a3"/><path d="M830 310L850 270L850 300L830 340z" fill="#c5a17b"/><path d="M720 250L830 310L830 340L720 280z" fill="#a8835e"/><path d="M720 250L745 228L850 270L830 310z" fill="#dec4a3"/><path d="M410 370L420 320L420 360L410 410z" fill="#c5a17b"/><path d="M310 310L410 370L410 410L310 350z" fill="#a8835e"/><path d="M310 310L340 280L420 320L410 370z" fill="#dec4a3"/><path d="M640 470L660 415L660 455L640 510z" fill="#c5a17b"/><path d="M420 340L640 470L640 510L420 380z" fill="#a8835e"/><path d="M420 340L440 320L660 415L640 470z" fill="#dec4a3"/><path d="M360 505L375 465L375 505L360 545z" fill="#c5a17b"/><path d="M245 430L360 505L360 545L245 470z" fill="#a8835e"/><path d="M245 430L260 415L375 465L360 505z" fill="#dec4a3"/><path d="M465 560L480 515L480 553L465 598z" fill="#c5a17b"/><path d="M365 490L465 560L465 598L365 528z" fill="#a8835e"/><path d="M365 490L385 470L480 515L465 560z" fill="#dec4a3"/><path d="M540 600L555 550L555 586L540 636z" fill="#c5a17b"/><path d="M465 540L540 600L540 636L465 576z" fill="#a8835e"/><path d="M465 540L485 520L555 550L540 600z" fill="#dec4a3"/><path d="M660 665L680 610L680 650L660 705z" fill="#c5a17b"/><path d="M555 590L660 665L660 705L555 630z" fill="#a8835e"/><path d="M555 590L580 560L680 610L660 665z" fill="#dec4a3"/><path d="M740 700L760 645L760 685L740 740z" fill="#c5a17b"/><path d="M680 640L740 700L740 740L680 680z" fill="#a8835e"/><path d="M680 640L700 615L760 645L740 700z" fill="#dec4a3"/><path d="M1030 835L1050 780L1050 822L1030 877z" fill="#c5a17b"/><path d="M760 690L1030 835L1030 877L760 732z" fill="#a8835e"/><path d="M760 690L785 660L1050 780L1030 835z" fill="#dec4a3"/><path d="M800 560L830 510L830 546L800 596z" fill="#c5a17b"/><path d="M700 490L800 560L800 596L700 526z" fill="#a8835e"/><path d="M700 490L720 470L830 510L800 560z" fill="#dec4a3"/><path d="M960 610L1000 565L1000 597L960 642z" fill="#c5a17b"/><path d="M900 560L960 610L960 642L900 592z" fill="#a8835e"/><path d="M900 560L930 540L1000 565L960 610z" fill="#dec4a3"/><path d="M1040 630L1070 575L1070 607L1040 662z" fill="#c5a17b"/><path d="M980 580L1040 630L1040 662L980 612z" fill="#a8835e"/><path d="M980 580L1010 550L1070 575L1040 630z" fill="#dec4a3"/><path d="M1100 660L1130 615L1130 649L1100 694z" fill="#c5a17b"/><path d="M1040 610L1100 660L1100 694L1040 644z" fill="#a8835e"/><path d="M1040 610L1070 585L1130 615L1100 660z" fill="#dec4a3"/><path d="M1260 720L1310 620L1310 654L1260 754z" fill="#c5a17b"/><path d="M1190 640L1260 720L1260 754L1190 674z" fill="#a8835e"/><path d="M1190 640L1240 580L1310 620L1260 720z" fill="#dec4a3"/><path d="M1395 430L1415 385L1415 413L1395 458z" fill="#c5a17b"/><path d="M1310 380L1395 430L1395 458L1310 408z" fill="#a8835e"/><path d="M1310 380L1335 355L1415 385L1395 430z" fill="#dec4a3"/><path d="M1465 250L1500 195L1500 223L1465 278z" fill="#c5a17b"/><path d="M1405 215L1465 250L1465 278L1405 243z" fill="#a8835e"/><path d="M1405 215L1440 175L1500 195L1465 250z" fill="#dec4a3"/><path d="M1610 345L1640 270L1640 330L1610 405z" fill="#c5a17b"/><path d="M1545 290L1610 345L1610 405L1545 350z" fill="#a8835e"/><path d="M1545 290L1585 245L1640 270L1610 345z" fill="#dec4a3"/><path d="M1600 390L1720 400L1720 426L1600 416z" fill="#c5a17b"/><path d="M1550 355L1600 390L1600 416L1550 381z" fill="#a8835e"/><path d="M1550 355L1720 345L1720 400L1600 390z" fill="#dec4a3"/><path d="M1570 790L1620 660L1620 720L1570 850z" fill="#c5a17b"/><path d="M1440 700L1570 790L1570 850L1440 760z" fill="#a8835e"/><path d="M1440 700L1500 600L1620 660L1570 790z" fill="#dec4a3"/><path d="M1720 790L1720 610L1720 640L1720 820z" fill="#c5a17b"/><path d="M1640 740L1720 790L1720 820L1640 770z" fill="#a8835e"/><path d="M1640 740L1700 600L1720 610L1720 790z" fill="#dec4a3"/><path d="M1630 940L1650 890L1650 930L1630 980z" fill="#c5a17b"/><path d="M1520 880L1630 940L1630 980L1520 920z" fill="#a8835e"/><path d="M1520 880L1540 840L1650 890L1630 940z" fill="#dec4a3"/><path d="M1210 900L1230 850L1230 890L1210 940z" fill="#c5a17b"/><path d="M1090 830L1210 900L1210 940L1090 870z" fill="#a8835e"/><path d="M1090 830L1110 795L1230 850L1210 900z" fill="#dec4a3"/><path d="M1075 890L1100 820L1100 856L1075 926z" fill="#c5a17b"/><path d="M1030 870L1075 890L1075 926L1030 906z" fill="#a8835e"/><path d="M1030 870L1060 800L1100 820L1075 890z" fill="#dec4a3"/><path d="M880 215L900 150L900 150L880 215z" fill="#c5a17b"/><path d="M520 43L880 215L880 215L520 43z" fill="#a8835e"/><path d="M520 43L640 43L900 150L880 215z" fill="#dec4a3"/><path d="M1255 350L1270 315L1270 341L1255 376z" fill="#c5a17b"/><path d="M1180 300L1255 350L1255 376L1180 326z" fill="#a8835e"/><path d="M1180 300L1200 285L1270 315L1255 350z" fill="#dec4a3"/><path d="M810 390l20-40 510 180-20 60z" fill="#f1e6d4"/><path d="M810 390l490 200v25l-490-200z" fill="#dcc6a6"/><path d="M1350 43h370v130l-30 60-350-110z" fill="#10181c"/><path d="M1690 233l30-60v80z" fill="#dfe6ee"/><path d="M1365 43l-25 80-70 70-70 100-110 120c-25 20-50 5-40-25l70-95-120 110c-25 20-55 0-35-30l105-120-140 105c-28 18-52-8-30-34l140-120-115 60c-30 12-45-18-20-36l130-85c60-40 120-70 200-100z" fill="#dcab8c"/><path d="M985 250l30-70 12 4-22 74z" fill="#27345a"/><path d="M985 250l8-18 14 6-10 30z" fill="#f3f3f3"/><path d="M48 43h195l-45 68-110 20-40-30z" fill="#9b735c"/><path d="M48 785l70-45 110 20 70 120 160 0 32 105H48z" fill="#17191c"/><path d="M250 940l200-60 40 105H260z" fill="#2a2c30"/><circle cx="145" cy="870" r="38" fill="#26282c"/><circle cx="160" cy="780" r="26" fill="#222428"/><path d="M700 985l140-95 95 95z" fill="#1a1b1e"/></svg>
<div style="position:absolute;left:1216.4px;top:800.9px;width:309.2px;height:57px;background:#2d2c2c;border-radius:3px"></div>
<div class="t" style="left:1229px;top:808.67px;font-size:9.6px;transform:scaleX(0.9401);transform-origin:0 0;color:#a8a6a4;">Ron Thames</div>
<div class="t" style="left:1288.5px;top:808.67px;font-size:9.6px;transform:scaleX(0.923);transform-origin:0 0;color:#a8a6a4;">1:14 PM</div>
<div class="t" style="left:1507px;top:807.3px;font-size:10.4px;color:#b4b5e6;">1</div>
<div class="t" style="left:1229px;top:822.84px;font-size:12px;transform:scaleX(0.92);transform-origin:0 0;color:#fff;">Wow, perfect! Let me go ahead and incorporate this into</div>
<div class="t" style="left:1229px;top:838.64px;font-size:12px;transform:scaleX(0.9406);transform-origin:0 0;color:#fff;">it now.</div>
<div style="position:absolute;left:1216.4px;top:893.3px;width:483.6px;height:31.4px;background:#2d2c2c;border-radius:3px"></div>
<div class="t" style="left:1229px;top:904.62px;font-size:11.2px;transform:scaleX(0.9448);transform-origin:0 0;color:#8f8d8b;">Type a new message</div>
<svg style="left:0;top:0" width="1781" height="1056" viewBox="0 0 1781 1056"><path d="M1650 66.800h9.600" stroke="#8a8a8a" stroke-width="1.100"/><rect x="1684.800" y="63" width="8.600" height="8.600" rx=".8" fill="none" stroke="#8a8a8a" stroke-width="1.100"/><path d="M1718.800 62.200l10 10M1728.800 62.200l-10 10" stroke="#9a9a9a" stroke-width="1.100"/>
<g><clipPath id="ra"><circle cx="1204.1" cy="105.8" r="12.9"/></clipPath><g clip-path="url(#ra)"><g transform="translate(1204.1 105.8) scale(1.03)"><rect x="-13" y="-13" width="26" height="26" fill="#e9ede4"/><path d="M-13 -13h11l-3 9-6 5-2 8z" fill="#9cc27a"/><path d="M3 -13h10v10l-5-2z" fill="#b5d196"/><path d="M5 -1h8v8H6z" fill="#dfe6ee"/><path d="M-7 13c0-5 2-7.500 5-8.500l5 1.500 7 2.500 3 4.500z" fill="#1c1c21"/><path d="M-1.500 3l4.500-.5 .5 4.500-3 2-2.500-2z" fill="#c9957a"/><ellipse cx="-1" cy="-2" rx="5" ry="6.200" transform="rotate(-12 -1 -2)" fill="#dcab8e"/><path d="M-6.500 -4.500c-.5-4 2.500-6.800 6-6.600 3.500.2 5.500 2.500 5.300 6.600-1.200-2.600-2.800-3.800-5.300-3.900-2.500-.1-4.400 1-6 3.900z" fill="#4a382d"/><path d="M-3.800 1.600c1.400 1.200 3.400 1.200 4.800.2" stroke="#fff" stroke-width=".9" fill="none"/></g></g><circle cx="1212.9" cy="114.5" r="5.8" fill="#201f1f"/><circle cx="1212.9" cy="114.5" r="4.8" fill="#c4314b"/></g>
<circle cx="1621.3" cy="105.500" r="12.500" fill="#7b7fd3"/>
<circle cx="1652.3" cy="105.500" r="12.500" fill="#7b7fd3"/>
<circle cx="1683.6" cy="105.500" r="12.500" fill="#7b7fd3"/>
<g fill="#fff"><rect x="1614.400" y="101.600" width="9.200" height="7.800" rx="1.600"/><path d="M1624.400 104.200l3.600-2.400v7.400l-3.600-2.400z"/></g><path d="M1614.500 111.800l12.400-12.800" stroke="#7b7fd3" stroke-width="2.600"/><path d="M1614.500 111.800l12.400-12.800" stroke="#fff" stroke-width="1.100"/>
<path d="M1648.600 100.200l1.900-.5c.5-.1 1 .1 1.200.6l.8 1.900c.2.400 0 .9-.3 1.200l-1 .8c.6 1.500 1.700 2.700 3.200 3.500l1-1.200c.3-.4.800-.5 1.200-.3l1.900.8c.5.200.7.700.6 1.200l-.4 1.700c-.1.500-.6.900-1.100.9-5.400-.2-9.700-4.300-9.900-9.600 0-.5.400-.9.900-1z" fill="#fff"/>
<g fill="none" stroke="#fff" stroke-width="1.200" stroke-linejoin="round" stroke-linecap="round"><rect x="1676.800" y="100.200" width="13.600" height="10.600" rx="1.600"/><path d="M1683.600 108.400v-5.400M1681.200 105.200l2.400-2.400 2.400 2.400"/></g>
<g fill="none" stroke="#d6d6d6" stroke-width="1"><circle cx="1719.200" cy="101.600" r="1.700"/><circle cx="1724" cy="102.300" r="1.300"/><path d="M1716.300 105.500h5.800v3c0 1.600-1.300 2.900-2.900 2.900s-2.900-1.300-2.900-2.900zM1723.300 105.800h2.600v2.400c0 1.100-.7 2-1.700 2.300M1727.400 98v3.400M1725.700 99.700h3.400"/></g>
<g><clipPath id="rb"><circle cx="1196.6" cy="404.8" r="12.6"/></clipPath><g clip-path="url(#rb)"><g transform="translate(1196.6 404.8) scale(1.01)"><rect x="-13" y="-13" width="26" height="26" fill="#e9ede4"/><path d="M-13 -13h11l-3 9-6 5-2 8z" fill="#9cc27a"/><path d="M3 -13h10v10l-5-2z" fill="#b5d196"/><path d="M5 -1h8v8H6z" fill="#dfe6ee"/><path d="M-7 13c0-5 2-7.500 5-8.500l5 1.500 7 2.500 3 4.500z" fill="#1c1c21"/><path d="M-1.500 3l4.500-.5 .5 4.500-3 2-2.500-2z" fill="#c9957a"/><ellipse cx="-1" cy="-2" rx="5" ry="6.200" transform="rotate(-12 -1 -2)" fill="#dcab8e"/><path d="M-6.500 -4.500c-.5-4 2.500-6.800 6-6.600 3.500.2 5.500 2.500 5.300 6.600-1.200-2.600-2.800-3.800-5.300-3.900-2.500-.1-4.400 1-6 3.900z" fill="#4a382d"/><path d="M-3.800 1.600c1.400 1.200 3.400 1.200 4.800.2" stroke="#fff" stroke-width=".9" fill="none"/></g></g><circle cx="1205.4" cy="413.5" r="5.8" fill="#201f1f"/><circle cx="1205.4" cy="413.5" r="4.8" fill="#c4314b"/></g>
<g transform="translate(1663 557.5)"><path d="M4.200 12.600V6.200l3.400-5.400c1.400-.2 2.200.8 1.800 2.400l-.7 2.600h3.200c1 0 1.600.8 1.400 1.700l-1 4.200c-.2.900-.9 1.400-1.800 1.400z" fill="#f8c136"/><rect x=".4" y="5.800" width="3.400" height="7.200" rx=".8" fill="#e79a22"/></g>
<g fill="none" stroke="#a6a7dc" stroke-width="1.200"><path d="M1704.200 780.600c3.400-5.200 10.200-5.200 13.600 0"/></g><circle cx="1711" cy="780" r="2.400" fill="#a6a7dc"/>
<g><clipPath id="rc"><circle cx="1196.6" cy="820.8" r="12.6"/></clipPath><g clip-path="url(#rc)"><g transform="translate(1196.6 820.8) scale(1.01)"><rect x="-13" y="-13" width="26" height="26" fill="#e9ede4"/><path d="M-13 -13h11l-3 9-6 5-2 8z" fill="#9cc27a"/><path d="M3 -13h10v10l-5-2z" fill="#b5d196"/><path d="M5 -1h8v8H6z" fill="#dfe6ee"/><path d="M-7 13c0-5 2-7.500 5-8.500l5 1.500 7 2.500 3 4.500z" fill="#1c1c21"/><path d="M-1.500 3l4.500-.5 .5 4.500-3 2-2.500-2z" fill="#c9957a"/><ellipse cx="-1" cy="-2" rx="5" ry="6.200" transform="rotate(-12 -1 -2)" fill="#dcab8e"/><path d="M-6.500 -4.500c-.5-4 2.500-6.800 6-6.600 3.500.2 5.500 2.500 5.300 6.600-1.200-2.600-2.800-3.800-5.300-3.900-2.500-.1-4.400 1-6 3.900z" fill="#4a382d"/><path d="M-3.800 1.600c1.400 1.200 3.400 1.200 4.800.2" stroke="#fff" stroke-width=".9" fill="none"/></g></g><circle cx="1205.4" cy="829.5" r="5.8" fill="#201f1f"/><circle cx="1205.4" cy="829.5" r="4.8" fill="#c4314b"/></g>
<g transform="translate(1490 806.5)"><path d="M4.200 12.600V6.200l3.400-5.400c1.400-.2 2.200.8 1.800 2.400l-.7 2.600h3.200c1 0 1.600.8 1.400 1.700l-1 4.200c-.2.900-.9 1.400-1.800 1.400z" fill="#f8c136"/><rect x=".4" y="5.800" width="3.400" height="7.200" rx=".8" fill="#e79a22"/></g>
<g fill="none" stroke="#c8c6c4" stroke-width="1.150" stroke-linecap="round" stroke-linejoin="round"><path d="M1222.200 943.600l3.800-9.600 2.800 7M1223.600 940.600h4.800" stroke-width="1.400"/><path d="M1229.200 945.400l5.200-5.400 1.500 1.400-5.200 5.400-2 .5zM1223 946.200h5.400"/><g transform="rotate(42 1278.500 939.600)"><path d="M1276.100 936.400v6.800a2.400 2.400 0 0 0 4.800 0v-9.200a1.600 1.600 0 0 0-3.200 0v8.600a.8.800 0 0 0 1.600 0v-6.200"/></g><circle cx="1303.300" cy="939.600" r="5.600"/><path d="M1300.800 941.200c1.400 1.600 3.600 1.600 5 0"/><rect x="1322.600" y="934.200" width="11.800" height="10.800" rx="2"/><path d="M1348 934.200h10.800v6.400l-4.400 4.400H1348zM1358.800 940.600h-4.400v4.400"/><path d="M1351.200 940.600c1 1.200 2.600 1.200 3.600.2"/></g>
<g fill="#c8c6c4"><circle cx="1301.300" cy="938.200" r=".8"/><circle cx="1305.300" cy="938.200" r=".8"/><circle cx="1351" cy="937.800" r=".7"/><circle cx="1355" cy="937.800" r=".7"/><path d="M1251.900 935.400c0-1.100.700-1.800 1.600-1.800s1.600.7 1.600 1.800l-.7 5.600c0 .5-.4.800-.9.800s-.9-.3-.9-.8z"/><circle cx="1253.500" cy="944.200" r="1.250"/></g>
<text x="1324.600" y="942" font-size="5.400" font-weight="bold" fill="#c8c6c4" font-family="Liberation Sans,sans-serif">GIF</text>
<g fill="none" stroke="#6a6968" stroke-width="1.100"><rect x="1373.200" y="934.400" width="10.800" height="10.400" rx="1.600" stroke-dasharray="2 1.300"/><path d="M1376 938.400h5.200M1376 941h3"/></g>
<g fill="#c8c6c4"><circle cx="1399.400" cy="939.800" r="1"/><circle cx="1403.400" cy="939.800" r="1"/><circle cx="1407.400" cy="939.800" r="1"/></g>
<path d="M1681.600 934.800l11.600 4.800-11.600 4.800 1.600-4.800zM1683.200 939.600h5" fill="none" stroke="#c8c6c4" stroke-width="1.200" stroke-linejoin="round"/></svg>
<!-- taskbar -->
<div style="position:absolute;left:1034px;top:963px;width:33px;height:33.7px;background:rgba(120,130,200,.17);border-radius:4px"></div>
<div style="position:absolute;left:1044px;top:993.7px;width:14px;height:2.8px;background:#5cc4f6;border-radius:1.400px"></div>
<div style="position:absolute;left:893px;top:994px;width:6px;height:2.5px;background:#8d92ad;border-radius:1.200px"></div>
<div style="position:absolute;left:1009px;top:994px;width:6px;height:2.5px;background:#8d92ad;border-radius:1.200px"></div>
<div style="position:absolute;left:1087px;top:994px;width:6px;height:2.5px;background:#8d92ad;border-radius:1.200px"></div>
<div style="position:absolute;left:1125px;top:994px;width:6px;height:2.5px;background:#8d92ad;border-radius:1.200px"></div>
<div class="t" style="left:1684.5px;top:969.3px;font-size:10.4px;transform:scaleX(0.9553);transform-origin:0 0;color:#fff;">2:30 PM</div>
<div class="t" style="left:1667.5px;top:983.4px;font-size:10.4px;transform:scaleX(1.0374);transform-origin:0 0;color:#fff;">10/20/2021</div>
<svg style="left:0;top:0" width="1781" height="1056" viewBox="0 0 1781 1056"><defs><linearGradient id="tw1" x1="0" y1="0" x2="1" y2="1"><stop offset="0" stop-color="#7bdcff"/><stop offset="1" stop-color="#1f9af0"/></linearGradient><linearGradient id="ted" x1="0" y1="0" x2="1" y2="1"><stop offset="0" stop-color="#35c1f1"/><stop offset=".6" stop-color="#1b7fd0"/><stop offset="1" stop-color="#0c59a4"/></linearGradient><linearGradient id="tfo" x1="0" y1="0" x2="0" y2="1"><stop offset="0" stop-color="#ffd75e"/><stop offset="1" stop-color="#f5b921"/></linearGradient></defs>
<g fill="url(#tw1)"><rect x="653.800" y="970" width="9.700" height="9.700" rx=".6"/><rect x="664.500" y="970" width="9.700" height="9.700" rx=".6"/><rect x="653.800" y="980.700" width="9.700" height="9.700" rx=".6"/><rect x="664.500" y="980.700" width="9.700" height="9.700" rx=".6"/></g>
<circle cx="704.100" cy="978.200" r="7.600" fill="#22408f" stroke="#f4f6fb" stroke-width="2.200"/><path d="M698.600 983.900l-5 5.200" stroke="#f4f6fb" stroke-width="2.600" stroke-linecap="round"/>
<rect x="731" y="976" width="15.500" height="13.500" rx="1" fill="#2a2c33"/><rect x="736" y="970.500" width="16" height="13.500" rx="1" fill="#e8e8ea"/><rect x="736" y="976" width="10.500" height="8" fill="#9d9fa5"/>
<rect x="769.800" y="970.400" width="21" height="19.400" rx="1.500" fill="#1769cf"/><rect x="771.300" y="972" width="7.400" height="16.200" fill="#f1f3f7"/><rect x="781" y="972" width="8.400" height="9" fill="#5fd0ff"/><rect x="781" y="982.600" width="8.400" height="5.600" fill="#2ea3f2"/>
<circle cx="818.700" cy="979.400" r="10.600" fill="#7176c6"/><path d="M810 986l-1.600 4.600 6-1.600z" fill="#7176c6"/><rect x="812.800" y="975.600" width="8.800" height="7.400" rx="1.400" fill="#fff"/><path d="M822.200 978.200l3-2v6.400l-3-2z" fill="#fff"/>
<path d="M846.400 972.400c0-.6.400-1 1-1h5.800l1.800 1.800h11.600c.6 0 1 .4 1 1v15c0 .6-.4 1-1 1h-19.200c-.6 0-1-.4-1-1z" fill="url(#tfo)"/><path d="M846.400 974.600h21.200" stroke="#e2a20f" stroke-width=".8"/><path d="M850.400 990.200v-6.400c0-.8.600-1.400 1.400-1.400h10.400c.8 0 1.400.6 1.400 1.400v6.400z" fill="#2b7fd2"/><path d="M852.600 985.400h8.800" stroke="#1a5ea8" stroke-width="1.400"/>
<circle cx="896" cy="979.600" r="10.800" fill="url(#ted)"/><path d="M896 968.800c6 0 10.800 4.600 10.800 10.200 0 3.200-2.400 5.200-5.400 5.200-2 0-3.400-.8-3.400-2 0-1 .8-1.400.8-2.800 0-2-2-3.800-4.600-3.800-3 0-5.800 2-7.800 5.600 0-7.200 4.200-12.400 9.600-12.400z" fill="#5fd38a" opacity=".9"/><path d="M890.600 979.200c1-2 3.200-3.400 5.600-3.400 2.600 0 4.600 1.800 4.600 3.800 0 1.400-.8 1.800-.8 2.800 0 1.200 1.400 2 3.400 2 1 0 2-.2 2.800-.8-1.800 3.800-5.200 6-9 6-4.200 0-7-3-7-6.600 0-1.400.2-2.600.4-3.800z" fill="#0e4f9c"/>
<path d="M929.800 973v-1.600c0-1.400 1-2.400 2.400-2.400h5.200c1.400 0 2.400 1 2.400 2.400v1.600" fill="none" stroke="#2e9ff0" stroke-width="1.500"/><rect x="924" y="972.200" width="21.600" height="17.600" rx="3" fill="#f3f4f6"/><rect x="929.800" y="975.800" width="4.600" height="4.600" fill="#f25022"/><rect x="935.200" y="975.800" width="4.600" height="4.600" fill="#7fba00"/><rect x="929.800" y="981.200" width="4.600" height="4.600" fill="#00a4ef"/><rect x="935.200" y="981.200" width="4.600" height="4.600" fill="#ffb900"/>
<rect x="967" y="970.200" width="16.800" height="18.800" rx="1.400" fill="#1490df"/><rect x="975.400" y="970.200" width="8.400" height="6.200" fill="#28a8ea"/><rect x="967" y="976.400" width="8.400" height="6.200" fill="#0f6cbd"/><rect x="975.400" y="976.400" width="8.400" height="6.200" fill="#1b8ad8"/><path d="M967 982.600h16.800v5c0 .8-.6 1.400-1.400 1.400h-14c-.8 0-1.400-.6-1.400-1.400z" fill="#35b8f1"/><rect x="962" y="973.600" width="12" height="12" rx="1" fill="#0f62b0"/><text x="964.600" y="982.800" font-size="9" font-family="Liberation Sans,sans-serif" font-weight="bold" fill="#fff">O</text>
<circle cx="1019.600" cy="973.600" r="2.400" fill="#7b83eb"/><circle cx="1012.800" cy="972.600" r="3.200" fill="#5b5fc7"/><path d="M1016.500 977.200h6c.6 0 1 .4 1 1v5.600c0 2.200-1.600 3.800-3.500 3.800s-3.500-1.600-3.500-3.800z" fill="#7b83eb"/><path d="M1007.400 977.200h10.200c.6 0 1 .4 1 1v6.600c0 3-2.600 5.400-5.600 5.400s-5.600-2.400-5.600-5.400z" fill="#5b5fc7"/><rect x="1001" y="973.400" width="12.400" height="12.400" rx="1" fill="#4b53bc"/><text x="1004.200" y="983" font-size="9.400" font-family="Liberation Sans,sans-serif" font-weight="bold" fill="#fff">T</text>
<rect x="1045.600" y="970" width="16.400" height="19.200" rx="1.400" fill="#21a366"/><rect x="1053.800" y="970" width="8.200" height="4.800" fill="#33c481"/><rect x="1045.600" y="974.800" width="8.200" height="4.800" fill="#107c41"/><rect x="1053.800" y="974.800" width="8.200" height="4.800" fill="#21a366"/><rect x="1045.600" y="979.600" width="8.200" height="4.800" fill="#185c37"/><rect x="1053.800" y="979.600" width="8.200" height="4.800" fill="#107c41"/><path d="M1045.600 984.400h16.400v3.400c0 .8-.6 1.400-1.400 1.400h-13.600c-.8 0-1.400-.6-1.400-1.400z" fill="#185c37"/><rect x="1040" y="973.400" width="12.400" height="12.400" rx="1" fill="#107c41"/><text x="1043" y="983" font-size="9.400" font-family="Liberation Sans,sans-serif" font-weight="bold" fill="#fff">X</text>
<circle cx="1090" cy="979.800" r="10" fill="#ed6c47"/><path d="M1090 969.800a10 10 0 0 1 10 10h-10z" fill="#ff8f6b"/><path d="M1090 989.800a10 10 0 0 1-8.600-5h17.200a10 10 0 0 1-8.600 5z" fill="#d35230"/><rect x="1078" y="973.400" width="12.400" height="12.400" rx="1" fill="#c43e1c"/><text x="1081.200" y="983" font-size="9.400" font-family="Liberation Sans,sans-serif" font-weight="bold" fill="#fff">P</text>
<rect x="1122.600" y="970" width="16.400" height="19.200" rx="1.400" fill="#2b7cd3"/><rect x="1122.600" y="970" width="16.400" height="4.800" fill="#41a5ee"/><rect x="1122.600" y="979.600" width="16.400" height="4.800" fill="#185abd"/><path d="M1122.600 984.400h16.400v3.400c0 .8-.6 1.400-1.400 1.400h-13.600c-.8 0-1.400-.6-1.400-1.400z" fill="#103f91"/><rect x="1117" y="973.400" width="12.400" height="12.400" rx="1" fill="#185abd"/><text x="1118.600" y="983" font-size="9.400" font-family="Liberation Sans,sans-serif" font-weight="bold" fill="#fff">W</text>
<path d="M1570.500 983l5.500-5.500 5.500 5.500" fill="none" stroke="#fff" stroke-width="1.500"/>
<g fill="none" stroke="#fff" stroke-width="1.300" stroke-linecap="round"><path d="M1598.600 977.600c4-4 10.200-4 14.200 0M1601 980.300c2.700-2.700 6.700-2.700 9.400 0M1603.400 983c1.300-1.300 3.300-1.300 4.600 0"/></g><circle cx="1605.700" cy="985.200" r="1.100" fill="#fff"/>
<g fill="none" stroke="#fff" stroke-width="1.200" stroke-linejoin="round" stroke-linecap="round"><path d="M1620 977.400h3l4.400-3.600v12.400l-4.400-3.600h-3z"/><path d="M1630 976.800c1.200 1.800 1.200 4.600 0 6.400M1632.400 974.800c2.200 3 2.200 7.400 0 10.400"/></g>
<rect x="1641.300" y="975.600" width="12.600" height="8" rx="2" fill="none" stroke="#fff" stroke-width="1.200"/><rect x="1643.300" y="977.600" width="8.600" height="4" rx=".8" fill="#fff"/><path d="M1655.200 978.200v2.800" stroke="#fff" stroke-width="1.400" stroke-linecap="round"/></svg></div></div>
</body>
</html>
